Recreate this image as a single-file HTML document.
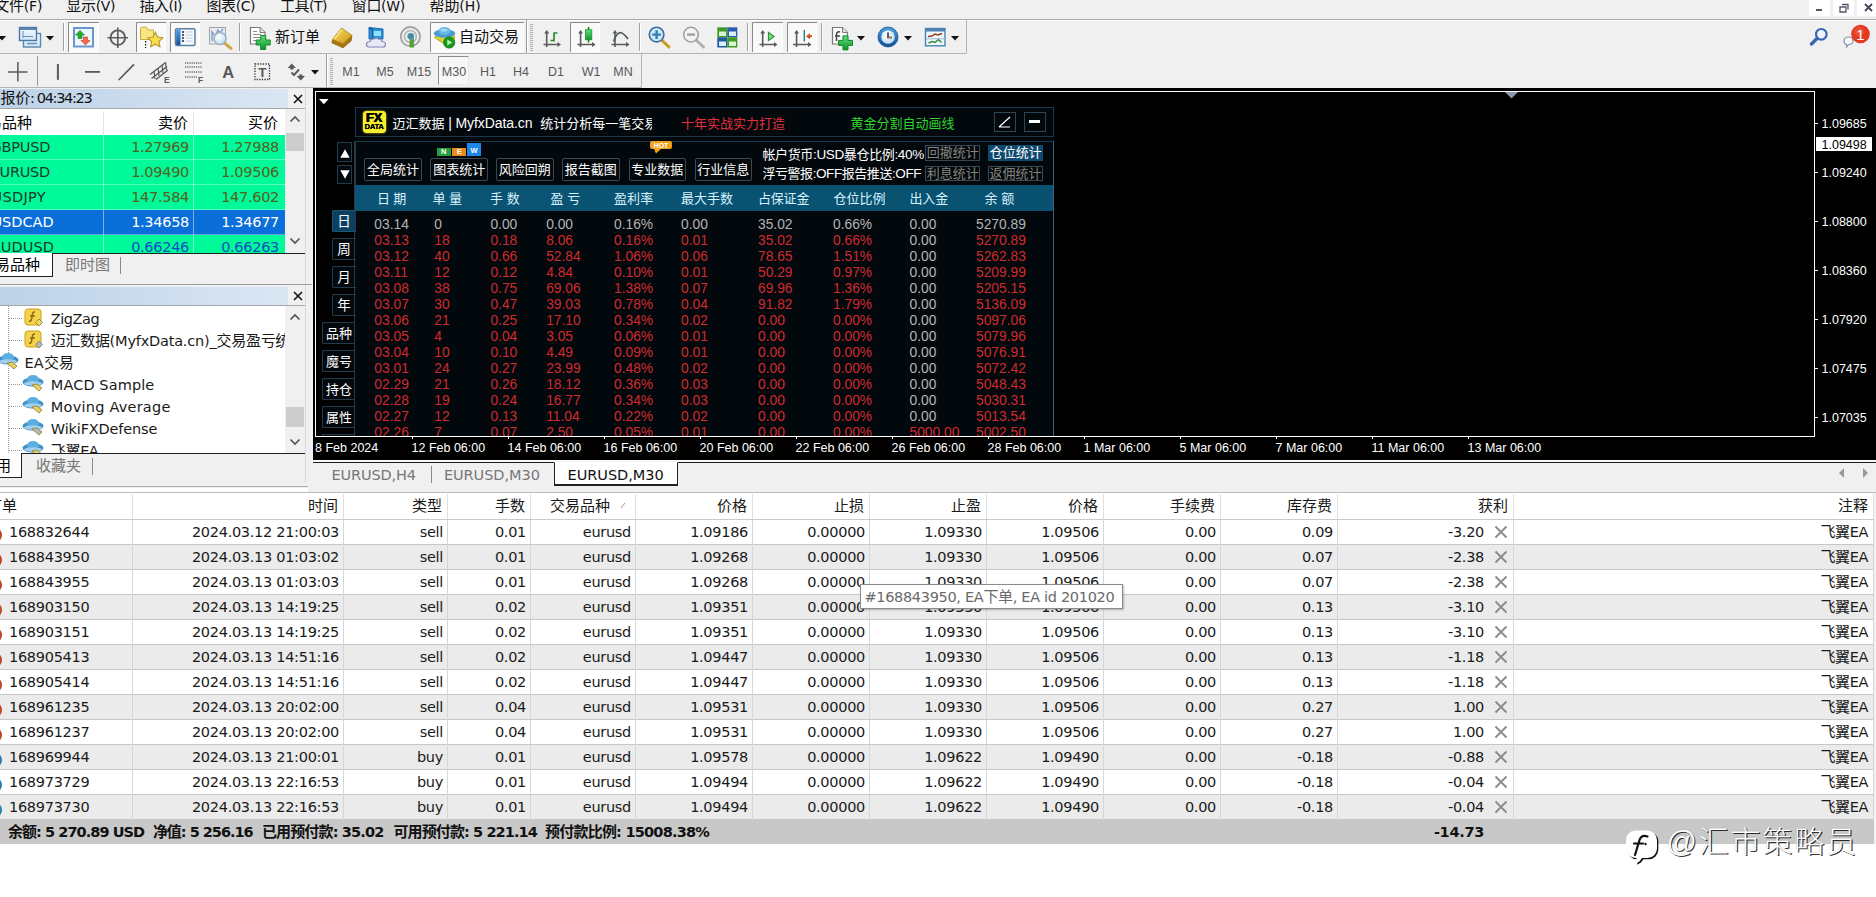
<!DOCTYPE html><html lang="zh"><head><meta charset="utf-8"><title>MT4</title><style>
*{box-sizing:border-box;margin:0;padding:0}
html,body{width:1876px;height:897px;overflow:hidden;background:#fff}
body{position:relative;font-family:"Liberation Sans","Noto Sans CJK SC",sans-serif;font-size:15px;color:#000}
.a{position:absolute;white-space:nowrap}
.menu{top:-4px;height:20px;line-height:20px;font-size:14px;font-family:"DejaVu Sans","Noto Sans CJK SC",sans-serif;color:#111}
.tb{background:#f0f0f0}
.u{font-family:"DejaVu Sans","Noto Sans CJK SC",sans-serif;font-size:14.5px;letter-spacing:-.3px}
.tf{font-size:12.5px;color:#585858;top:63px;height:18px;line-height:18px;text-align:center}
.mw td{}
.cell{position:absolute;white-space:nowrap;height:24px;line-height:24px;font-size:14.5px;letter-spacing:-.3px;font-family:"DejaVu Sans","Noto Sans CJK SC",sans-serif;color:#1a1a1a;text-align:right}
.hc{position:absolute;white-space:nowrap;height:25px;line-height:25px;font-size:15px;color:#1a1a1a;text-align:right}
.ov{font-family:"Liberation Sans","Noto Sans CJK SC",sans-serif}
.d{position:absolute;white-space:nowrap;font-size:13.8px;height:16px;line-height:16px;color:#d02b2e}
.g{color:#b4b4b4}
.btn{position:absolute;border:1px solid #3a4a55;color:#fff;font-size:13.5px;text-align:center;white-space:nowrap;overflow:hidden}
.side{position:absolute;border:1px solid #24404f;color:#fff;font-size:13.5px;text-align:center;white-space:nowrap;height:22px;line-height:20px}
.ax{position:absolute;white-space:nowrap;color:#fff;font-size:12.5px;font-family:"Liberation Sans",sans-serif;height:14px;line-height:14px}
</style></head><body>
<div class="a tb" style="left:0;top:0;width:1876px;height:88px"></div>
<div class="a" style="left:0;top:19px;width:1876px;height:1px;background:#a8a8a8"></div>
<div class="a" style="left:0;top:20px;width:1876px;height:1px;background:#fff"></div>
<div class="a menu" style="left:-5.8px"><span id="t1" style="letter-spacing:-0.20px"><span style="font-size:15px">文件</span>(F)</span></div>
<div class="a menu" style="left:66.3px"><span id="t2" style="letter-spacing:-0.31px"><span style="font-size:15px">显示</span>(V)</span></div>
<div class="a menu" style="left:139.5px"><span id="t3" style="letter-spacing:-0.52px"><span style="font-size:15px">插入</span>(I)</span></div>
<div class="a menu" style="left:206.5px"><span id="t4" style="letter-spacing:-0.44px"><span style="font-size:15px">图表</span>(C)</span></div>
<div class="a menu" style="left:280px"><span id="t5" style="letter-spacing:-0.50px"><span style="font-size:15px">工具</span>(T)</span></div>
<div class="a menu" style="left:351.8px"><span id="t6" style="letter-spacing:-0.36px"><span style="font-size:15px">窗口</span>(W)</span></div>
<div class="a menu" style="left:429.5px"><span id="t7" style="letter-spacing:-0.09px"><span style="font-size:15px">帮助</span>(H)</span></div>
<div class="a" style="left:1809px;top:0;width:21px;height:16px;background:#fff"></div>
<div class="a" style="left:1833px;top:0;width:21px;height:16px;background:#fff"></div>
<div class="a" style="left:1857px;top:0;width:19px;height:16px;background:#fff"></div>
<div class="a" style="left:1816px;top:9px;width:6px;height:2px;background:#556"></div>
<svg class="a" style="left:1838px;top:2px" width="12" height="12" viewBox="0 0 12 12"><path d="M4 2.5h6v5M2 5h6v5h-6z" fill="none" stroke="#556" stroke-width="1.3"/></svg>
<svg class="a" style="left:1863px;top:2px" width="12" height="12" viewBox="0 0 12 12"><path d="M2 2l7 7M9 2l-7 7" fill="none" stroke="#445" stroke-width="1.8"/></svg>
<svg class="a" style="left:0;top:0" width="1876" height="89" viewBox="0 0 1876 89"><defs><linearGradient id="gw" x1="0" y1="0" x2="0" y2="1"><stop offset="0" stop-color="#f4fafe"/><stop offset="1" stop-color="#cfe6f7"/></linearGradient><linearGradient id="gg" x1="0" y1="0" x2="0" y2="1"><stop offset="0" stop-color="#5fe07a"/><stop offset="1" stop-color="#12902e"/></linearGradient><linearGradient id="gy" x1="0" y1="0" x2="1" y2="1"><stop offset="0" stop-color="#fbe36a"/><stop offset="1" stop-color="#c99412"/></linearGradient><linearGradient id="gb" x1="0" y1="0" x2="0" y2="1"><stop offset="0" stop-color="#4aa0e6"/><stop offset="1" stop-color="#134f94"/></linearGradient><radialGradient id="gc" cx=".4" cy=".35" r=".7"><stop offset="0" stop-color="#ffffff"/><stop offset="1" stop-color="#b9dcf5"/></radialGradient></defs><path d="M-2 36h8l-4 4.500z" fill="#111"/><rect x="23.5" y="33.500" width="17" height="13.500" fill="url(#gw)" stroke="#5a86b4" stroke-width="1.4"/><rect x="19.5" y="27.500" width="17" height="13" fill="url(#gw)" stroke="#5078a4" stroke-width="1.4"/><path d="M19.5 29h17" stroke="#5a86b4" stroke-width="2"/><path d="M23 31v7M23 36.500h10" stroke="#6a90b8" stroke-width="1" fill="none"/><path d="M27 43.500h10" stroke="#6a90b8" stroke-width="1.5"/><path d="M46 36h8l-4 4.500z" fill="#111"/><path d="M63.5 23V51" stroke="#a0a0a0" stroke-width="1"/><path d="M64.5 23V51" stroke="#fff" stroke-width="1"/><rect x="68" y="22" width="31" height="30" fill="#f9f9f9"/><path d="M68.5 52V22.5H99" fill="none" stroke="#8a8a8a" stroke-width="1"/><path d="M69 51.5H98.5V23" fill="none" stroke="#fff" stroke-width="1"/><rect x="74" y="28" width="19" height="18.500" fill="#eef7fd" stroke="#6a96cc" stroke-width="2"/><path d="M80 30.500l4.500 4.500h-2.500v3.500h-4v-3.500h-2.500z" fill="#22b030" stroke="#108a20" stroke-width=".7"/><path d="M85.500 45l-4.500-4.500h2.500v-3.500h4v3.500h2.500z" fill="#f46a4a" stroke="#d04828" stroke-width=".7"/><circle cx="117.800" cy="37.700" r="7.300" fill="none" stroke="#5e5e5e" stroke-width="1.9"/><path d="M117.800 27.500v20.500M107.500 37.700h20.500" stroke="#5e5e5e" stroke-width="1.600"/><rect x="136" y="22" width="30" height="30" fill="#f9f9f9"/><path d="M136.5 52V22.5H166" fill="none" stroke="#8a8a8a" stroke-width="1"/><path d="M137 51.5H165.5V23" fill="none" stroke="#fff" stroke-width="1"/><path d="M140.500 39.500v-10.500q0-2 2-2h3q1.500 0 2 1.500l.5 1.500h5.500v9.500z" fill="#f7e683" stroke="#c8ad3a" stroke-width="1"/><path d="M155.300 32.300l2.300 4.800 5.200.7-3.800 3.700.9 5.200-4.600-2.500-4.600 2.500.9-5.200-3.800-3.700 5.200-.7z" fill="#f5df4d" stroke="#b8962a" stroke-width="1.100"/><path d="M145.600 41v7" stroke="#222" stroke-width="1.300" stroke-dasharray="1.500 1.500"/><rect x="170" y="22" width="30" height="30" fill="#f9f9f9"/><path d="M170.5 52V22.5H200" fill="none" stroke="#8a8a8a" stroke-width="1"/><path d="M171 51.5H199.5V23" fill="none" stroke="#fff" stroke-width="1"/><rect x="175.500" y="28.800" width="19.500" height="16.800" rx="1.500" fill="#f2f8fd" stroke="#5a7f9f" stroke-width="1.500"/><rect x="176.200" y="29.500" width="4.300" height="15.400" fill="url(#gb)"/><path d="M182 32h2M182 35h2M182 38h2M182 41h2" stroke="#223" stroke-width="1.300"/><path d="M185.500 32h7M185.500 35h7M185.500 38h7M185.500 41h7" stroke="#c8ccd8" stroke-width="1"/><rect x="209.500" y="27.500" width="16" height="16.500" fill="#e8eaee" stroke="#a0a4aa" stroke-width="1"/><path d="M212 41v-9l3 4 3-6 2 3 3-4" fill="none" stroke="#7a9ac0" stroke-width="1.300"/><path d="M224 42.500l7 6" stroke="#d4a94a" stroke-width="3" stroke-linecap="round"/><circle cx="220" cy="38.500" r="6" fill="url(#gc)" fill-opacity=".9" stroke="#9eb2c6" stroke-width="1.600"/><path d="M239.5 23V51" stroke="#a0a0a0" stroke-width="1"/><path d="M240.5 23V51" stroke="#fff" stroke-width="1"/><path d="M250.500 27.500h9.500l5 5v11.500h-14.500z" fill="#fff" stroke="#7a7a7a" stroke-width="1.200"/><path d="M260 27.500v5h5" fill="#e4e4e4" stroke="#7a7a7a" stroke-width="1"/><path d="M253 31.500h4M253 34.500h8M253 37.500h8M253 40.500h5" stroke="#8a8a8a" stroke-width="1.200"/><path d="M260.7 35.5h5.0v4.5h4.5v5.0h-4.5v4.5h-5.0v-4.5h-4.5v-5.0h4.5z" fill="url(#gg)" stroke="#0e8a2a" stroke-width="1"/><path d="M332.500 39.500L343 43.500L352 35.500L351 41L343 47.800L332 42.800z" fill="#a87610" stroke="#8a5e08" stroke-width=".8"/><path d="M341.500 28L352 35.500L343 43.500L332.500 39.500z" fill="url(#gy)" stroke="#b88a14" stroke-width=".9"/><path d="M341.500 29.500l-7 9.500" stroke="#fff2a8" stroke-width="1.200" fill="none"/><path d="M369 27.500l14 1.500v10h-14z" fill="#2d8fdb" stroke="#1b6cb4" stroke-width="1"/><rect x="373.500" y="31" width="7.500" height="5" fill="#8fe0f8"/><path d="M369 27.500l3.500 2v9" fill="none" stroke="#1560a8" stroke-width="1.500"/><path d="M368.500 47q-2.500-.5-2-3 .5-2.500 3.500-2.500 1-3 4-2.500 2-2 4.500 0 3-.5 3.500 2.500 3.500 0 3.500 3 0 2.500-2.500 2.500z" fill="#e8eaf6" stroke="#7d86b4" stroke-width="1.200"/><circle cx="410.400" cy="36.600" r="9.600" fill="#f4f4f4" stroke="#a2a2a2" stroke-width="1.800"/><circle cx="410.400" cy="36.600" r="6" fill="none" stroke="#b4b8ba" stroke-width="1.800"/><path d="M409.500 38v9.500h4.500v-9.500z" fill="#57a13c"/><circle cx="410.800" cy="36.300" r="3.200" fill="#4b86a8" stroke="#6aa" stroke-width=".8"/><rect x="430" y="22" width="94" height="30" fill="#f9f9f9"/><path d="M430.500 52V22.500H524" fill="none" stroke="#8a8a8a"/><path d="M431 51.500H523.500V23" fill="none" stroke="#fff"/><path d="M435 36l9.500-3 10 3v3l-7 7-12.500-8z" fill="#d9d336" stroke="#a8a020" stroke-width=".8"/><ellipse cx="444.500" cy="33.500" rx="10.800" ry="4.200" fill="#4f9bd0"/><ellipse cx="444.500" cy="31" rx="6" ry="4" fill="#6ab8e6"/><ellipse cx="444" cy="30" rx="3.500" ry="1.600" fill="#a5d8f3"/><circle cx="449.200" cy="42.500" r="5.600" fill="#17971c" stroke="#0c7a12" stroke-width=".8"/><path d="M447.300 39.500l5 3-5 3z" fill="#b8f5b0"/><path d="M526.500 20V53" stroke="#9a9a9a"/><path d="M527.500 20V53" stroke="#fff"/><rect x="530" y="24" width="3" height="1" fill="#b0b0b0"/><rect x="530" y="26" width="3" height="1" fill="#b0b0b0"/><rect x="530" y="28" width="3" height="1" fill="#b0b0b0"/><rect x="530" y="30" width="3" height="1" fill="#b0b0b0"/><rect x="530" y="32" width="3" height="1" fill="#b0b0b0"/><rect x="530" y="34" width="3" height="1" fill="#b0b0b0"/><rect x="530" y="36" width="3" height="1" fill="#b0b0b0"/><rect x="530" y="38" width="3" height="1" fill="#b0b0b0"/><rect x="530" y="40" width="3" height="1" fill="#b0b0b0"/><rect x="530" y="42" width="3" height="1" fill="#b0b0b0"/><rect x="530" y="44" width="3" height="1" fill="#b0b0b0"/><rect x="530" y="46" width="3" height="1" fill="#b0b0b0"/><rect x="530" y="48" width="3" height="1" fill="#b0b0b0"/><rect x="530" y="50" width="3" height="1" fill="#b0b0b0"/><path d="M546.7 47V32M543.5 44.5H559" stroke="#5a5a5a" stroke-width="1.6" fill="none"/><path d="M544.2 33.5L546.7 30l2.500 3.500zM557.5 42.0L561 44.5l-3.500 2.500z" fill="#5a5a5a"/><path d="M554 41.500V32.500M554 40.500h-3.500M554 33h3.500" stroke="#2a8a2a" stroke-width="1.700" fill="none"/><rect x="570" y="22" width="30" height="30" fill="#f9f9f9"/><path d="M570.5 52V22.5H600" fill="none" stroke="#8a8a8a" stroke-width="1"/><path d="M571 51.5H599.5V23" fill="none" stroke="#fff" stroke-width="1"/><path d="M580.6 47V32M577.5 44.5H593.5" stroke="#5a5a5a" stroke-width="1.6" fill="none"/><path d="M578.1 33.5L580.6 30l2.500 3.500zM592.0 42.0L595.5 44.5l-3.500 2.500z" fill="#5a5a5a"/><path d="M588.600 27v15.500" stroke="#1a7a1a" stroke-width="1.600"/><rect x="585.500" y="29.800" width="6.300" height="10" fill="url(#gg)" stroke="#109a28" stroke-width=".8"/><path d="M615 47V32M611.5 44.5H627.5" stroke="#5a5a5a" stroke-width="1.6" fill="none"/><path d="M612.5 33.5L615 30l2.500 3.500zM626.0 42.0L629.5 44.5l-3.500 2.500z" fill="#5a5a5a"/><path d="M613.500 41.500q3-8.500 7-9 2.500 0 7.500 6.500" fill="none" stroke="#4a5a4a" stroke-width="1.600"/><path d="M639.5 23V51" stroke="#a0a0a0" stroke-width="1"/><path d="M640.5 23V51" stroke="#fff" stroke-width="1"/><path d="M661.500 40l7.500 7" stroke="#d9b23a" stroke-width="3.200" stroke-linecap="round"/><path d="M662 40.500l7 6.500" stroke="#9a7a1a" stroke-width="1" /><circle cx="656.600" cy="34.600" r="7.300" fill="#c9e9fa" stroke="#3b6c9c" stroke-width="1.600"/><path d="M656.600 30.300v8.600M652.300 34.600h8.600" stroke="#3a7cae" stroke-width="2.400"/><path d="M696 40l7.500 7" stroke="#b0b0b0" stroke-width="3" stroke-linecap="round"/><circle cx="691" cy="34.600" r="7.300" fill="#f3f3f3" stroke="#a0a0a0" stroke-width="1.500"/><path d="M687 34.600h8" stroke="#a2a2a2" stroke-width="2.400"/><rect x="717.300" y="27.300" width="10" height="10" fill="#3e9a28"/><rect x="727.300" y="27.300" width="10" height="10" fill="#2c5cb0"/><rect x="717.300" y="37.300" width="10" height="10.200" fill="#1c5c9c"/><rect x="727.300" y="37.300" width="10" height="10.200" fill="#3e9a28"/><rect x="719" y="31.500" width="7" height="4.500" fill="#d9f4cf"/><rect x="729" y="31.500" width="7" height="4.500" fill="#dbeefc"/><rect x="719" y="41.500" width="7" height="4.500" fill="#dbeefc"/><rect x="729" y="41.500" width="7" height="4.500" fill="#d9f4cf"/><path d="M747.5 23V51" stroke="#a0a0a0" stroke-width="1"/><path d="M748.5 23V51" stroke="#fff" stroke-width="1"/><rect x="752" y="22" width="31" height="30" fill="#f9f9f9"/><path d="M752.5 52V22.5H783" fill="none" stroke="#8a8a8a" stroke-width="1"/><path d="M753 51.5H782.5V23" fill="none" stroke="#fff" stroke-width="1"/><path d="M762.7 47V32M759.5 44.5H775.5" stroke="#5a5a5a" stroke-width="1.6" fill="none"/><path d="M760.2 33.5L762.7 30l2.500 3.500zM774.0 42.0L777.5 44.5l-3.500 2.500z" fill="#5a5a5a"/><path d="M768.500 32.500l5.500 4-5.500 4z" fill="#8fdc90" stroke="#2a9a3a" stroke-width="1.300"/><rect x="787" y="22" width="30" height="30" fill="#f9f9f9"/><path d="M787.5 52V22.5H817" fill="none" stroke="#8a8a8a" stroke-width="1"/><path d="M788 51.5H816.5V23" fill="none" stroke="#fff" stroke-width="1"/><path d="M796.6 47V32M793 44.5H809.5" stroke="#5a5a5a" stroke-width="1.6" fill="none"/><path d="M794.1 33.5L796.6 30l2.500 3.500zM808.0 42.0L811.5 44.5l-3.500 2.500z" fill="#5a5a5a"/><path d="M804.300 30v11.500" stroke="#2a7a8a" stroke-width="1.400"/><path d="M806 36.300l4-3v2h2v2h-2v2z" fill="#c8502a"/><path d="M821.5 23V51" stroke="#a0a0a0" stroke-width="1"/><path d="M822.5 23V51" stroke="#fff" stroke-width="1"/><path d="M832.500 27.500h10l5 5v11.500h-15z" fill="#fafafa" stroke="#7a7a7a" stroke-width="1.200"/><path d="M842.500 27.500v5h5" fill="#e4e4e4" stroke="#7a7a7a" stroke-width="1"/><path d="M840 32c-3-.8-3.500 1-3.500 3.500v5.500M835 36h5" stroke="#444" stroke-width="1.500" fill="none"/><path d="M843.0 35.9h5.0v4.5h4.5v5.0h-4.5v4.5h-5.0v-4.5h-4.5v-5.0h4.5z" fill="url(#gg)" stroke="#0e8a2a" stroke-width="1"/><path d="M857 36h8l-4 4.500z" fill="#111"/><circle cx="888" cy="37" r="10" fill="url(#gb)" stroke="#0f4a8a" stroke-width=".8"/><circle cx="888" cy="37" r="6.800" fill="url(#gc)"/><path d="M888 32.500v5h4" stroke="#222" stroke-width="1.500" fill="none"/><path d="M888 37.500h4" stroke="#c86a1a" stroke-width="1.300"/><path d="M904 36h8l-4 4.500z" fill="#111"/><rect x="925.500" y="28.500" width="19.500" height="17.300" fill="#eef7fd" stroke="#4c82b4" stroke-width="1.400"/><rect x="925.500" y="28.500" width="19.500" height="3" fill="#4c82b4"/><path d="M928 36.500l4-.5 3-2 3 1 4-1.500" fill="none" stroke="#9a3a1a" stroke-width="1.500"/><path d="M928.500 43l3.500-1.500 3 1 3.500-3 3 3" fill="none" stroke="#3a8a3a" stroke-width="1.500"/><path d="M926 38.800h19" stroke="#9ab8d0" stroke-width="1"/><path d="M951 36h8l-4 4.500z" fill="#111"/><path d="M966.500 20V53.500H0" fill="none" stroke="#b4b4b4"/><path d="M1811.500 44l5.500-5.500" stroke="#3a66b0" stroke-width="3.400" stroke-linecap="round"/><circle cx="1821.300" cy="34.300" r="5.300" fill="#eef4fc" stroke="#3a66b0" stroke-width="2.200"/><path d="M1844 41q0-4 4.500-4 4.500 0 4.500 4 0 3.500-4.500 3.500l-2 2.500v-2.500q-2.500-.5-2.500-3.500z" fill="#f8f8fa" stroke="#8a94b0" stroke-width="1.200"/><circle cx="1860.500" cy="34" r="9.300" fill="#e03a22"/><circle cx="1859" cy="31.500" r="5" fill="#f0583a" fill-opacity=".6"/><text x="1860.500" y="39.500" font-size="15" fill="#fff" text-anchor="middle" font-family="Liberation Sans,sans-serif">1</text><path d="M17.900 62v19.500M8 71.900h19.500" stroke="#5a5a5a" stroke-width="1.500"/><path d="M37.500 56V86" stroke="#9a9a9a"/><path d="M57.900 64v15.800" stroke="#5a5a5a" stroke-width="2"/><path d="M85 71.900h15" stroke="#5a5a5a" stroke-width="1.800"/><path d="M118.700 80L134 64.400" stroke="#5a5a5a" stroke-width="1.700"/><path d="M150 74.500l15-11.500M151.500 78.500l15.500-12M156 79.500l12-9.500" stroke="#5a5a5a" stroke-width="1.400"/><path d="M154 71l1 8M158 68l1 8M162 65l1 8M165.500 62l1 8" stroke="#5a5a5a" stroke-width="1.200"/><text x="164" y="82.500" font-size="8.500" font-weight="bold" fill="#5a5a5a" font-family="Liberation Sans,sans-serif">E</text><path d="M185 63h17" stroke="#6a6a6a" stroke-width="1.400" stroke-dasharray="1.200 1"/><path d="M185 67h17" stroke="#6a6a6a" stroke-width="1.400" stroke-dasharray="1.200 1"/><path d="M185 72h17" stroke="#6a6a6a" stroke-width="1.400" stroke-dasharray="1.200 1"/><path d="M185 77h12" stroke="#6a6a6a" stroke-width="1.400" stroke-dasharray="1.200 1"/><text x="198" y="82.500" font-size="8.500" font-weight="bold" fill="#5a5a5a" font-family="Liberation Sans,sans-serif">F</text><text x="228.300" y="78" font-size="16.500" font-weight="bold" fill="#5a5a5a" text-anchor="middle" font-family="Liberation Sans,sans-serif">A</text><rect x="255" y="64" width="14.500" height="15.500" fill="none" stroke="#333" stroke-width="1.300" stroke-dasharray="1.300 1.300"/><text x="262.300" y="77.300" font-size="13.500" font-weight="bold" fill="#5a5a5a" text-anchor="middle" font-family="Liberation Sans,sans-serif">T</text><path d="M291.800 63.500l4.200 4.500h-2.500v1.500h-3.400v-1.500h-2.500z" fill="#5a5a5a"/><path d="M300.800 80.500l-4.200-4.500h2.500v-1.500h3.400v1.500h2.500z" fill="#5a5a5a"/><path d="M291.500 72.500l2.500 2.500 5-5.500" fill="none" stroke="#5a5a5a" stroke-width="1.900"/><path d="M311 70h8l-4 4.500z" fill="#111"/><path d="M326.500 54V88" stroke="#9a9a9a"/><path d="M327.500 54V88" stroke="#fff"/><rect x="330" y="58" width="3" height="1" fill="#b0b0b0"/><rect x="330" y="60" width="3" height="1" fill="#b0b0b0"/><rect x="330" y="62" width="3" height="1" fill="#b0b0b0"/><rect x="330" y="64" width="3" height="1" fill="#b0b0b0"/><rect x="330" y="66" width="3" height="1" fill="#b0b0b0"/><rect x="330" y="68" width="3" height="1" fill="#b0b0b0"/><rect x="330" y="70" width="3" height="1" fill="#b0b0b0"/><rect x="330" y="72" width="3" height="1" fill="#b0b0b0"/><rect x="330" y="74" width="3" height="1" fill="#b0b0b0"/><rect x="330" y="76" width="3" height="1" fill="#b0b0b0"/><rect x="330" y="78" width="3" height="1" fill="#b0b0b0"/><rect x="330" y="80" width="3" height="1" fill="#b0b0b0"/><rect x="330" y="82" width="3" height="1" fill="#b0b0b0"/><rect x="330" y="84" width="3" height="1" fill="#b0b0b0"/><path d="M641.500 54V87.500H0" fill="none" stroke="#b4b4b4"/></svg>
<div class="a tf" style="left:331px;width:40px">M1</div>
<div class="a tf" style="left:365px;width:40px">M5</div>
<div class="a tf" style="left:399px;width:40px">M15</div>
<div class="a" style="left:438px;top:56px;width:31px;height:29px;background:#f7f7f7;border:1px solid #e8e8e8;border-top-color:#8e8e8e;border-left-color:#8e8e8e"></div>
<div class="a tf" style="left:434px;width:40px">M30</div>
<div class="a tf" style="left:468px;width:40px">H1</div>
<div class="a tf" style="left:501px;width:40px">H4</div>
<div class="a tf" style="left:536px;width:40px">D1</div>
<div class="a tf" style="left:571px;width:40px">W1</div>
<div class="a tf" style="left:603px;width:40px">MN</div>
<div class="a" style="left:275px;top:27px;font-size:15px;height:20px;line-height:20px;color:#111">新订单</div>
<div class="a" style="left:459px;top:27px;font-size:15px;height:20px;line-height:20px;color:#111">自动交易</div>
<div class="a" style="left:0;top:88px;width:313px;height:400px;background:#f0f0f0"></div>
<div class="a" style="left:0;top:89px;width:288px;height:19px;background:linear-gradient(90deg,#bcd2e8,#dbe6f3)"></div>
<div class="a u" style="right:1784.6px;top:89px;height:19px;line-height:19px;color:#111"><span style="font-size:15px">报价</span><span id="t8" style="letter-spacing:-1.31px">: 04:34:23</span></div>
<svg class="a" style="left:292px;top:92.500px" width="12" height="12" viewBox="0 0 12 12"><path d="M2 2l8 8M10 2l-8 8" stroke="#111" stroke-width="1.6"/></svg>
<div class="a" style="left:0;top:108px;width:306px;height:1px;background:#a6a6a6"></div>
<div class="a" style="left:0;top:109px;width:285px;height:144px;background:#fff"></div>
<div class="a" style="left:-28px;top:111px;height:24px;line-height:24px;font-size:15px">交易品种</div>
<div class="a" style="left:104px;top:111px;width:84px;height:24px;line-height:24px;font-size:15px;text-align:right">卖价</div>
<div class="a" style="left:194px;top:111px;width:84px;height:24px;line-height:24px;font-size:15px;text-align:right">买价</div>
<div class="a" style="left:103px;top:111px;width:1px;height:24px;background:#e4e4e4"></div>
<div class="a" style="left:193px;top:111px;width:1px;height:24px;background:#e4e4e4"></div>
<div class="a" style="left:0;top:135px;width:285px;height:25px;background:#00fa9a;overflow:hidden">
<div class="a u" style="left:-9.6px;top:0;height:25px;line-height:25px;color:#1a3a2a"><span id="t9" style="letter-spacing:-0.19px">GBPUSD</span></div>
<div class="a u" style="left:104px;top:0;width:85px;height:25px;line-height:25px;color:#55621c;text-align:right">1.27969</div>
<div class="a u" style="left:194px;top:0;width:85px;height:25px;line-height:25px;color:#55621c;text-align:right">1.27988</div>
<div class="a" style="left:103px;top:0;width:1px;height:25px;background:rgba(255,255,255,.45)"></div>
<div class="a" style="left:193px;top:0;width:1px;height:25px;background:rgba(255,255,255,.45)"></div>
<div class="a" style="left:0;top:24px;width:285px;height:1px;background:rgba(255,255,255,.35)"></div>
</div>
<div class="a" style="left:0;top:160px;width:285px;height:25px;background:#00fa9a;overflow:hidden">
<div class="a u" style="left:-9.4px;top:0;height:25px;line-height:25px;color:#1a3a2a"><span id="t10" style="letter-spacing:-0.24px">EURUSD</span></div>
<div class="a u" style="left:104px;top:0;width:85px;height:25px;line-height:25px;color:#55621c;text-align:right">1.09490</div>
<div class="a u" style="left:194px;top:0;width:85px;height:25px;line-height:25px;color:#55621c;text-align:right">1.09506</div>
<div class="a" style="left:103px;top:0;width:1px;height:25px;background:rgba(255,255,255,.45)"></div>
<div class="a" style="left:193px;top:0;width:1px;height:25px;background:rgba(255,255,255,.45)"></div>
<div class="a" style="left:0;top:24px;width:285px;height:1px;background:rgba(255,255,255,.35)"></div>
</div>
<div class="a" style="left:0;top:185px;width:285px;height:25px;background:#00fa9a;overflow:hidden">
<div class="a u" style="left:-8.4px;top:0;height:25px;line-height:25px;color:#1a3a2a"><span id="t11" style="letter-spacing:0.28px">USDJPY</span></div>
<div class="a u" style="left:104px;top:0;width:85px;height:25px;line-height:25px;color:#55621c;text-align:right">147.584</div>
<div class="a u" style="left:194px;top:0;width:85px;height:25px;line-height:25px;color:#55621c;text-align:right">147.602</div>
<div class="a" style="left:103px;top:0;width:1px;height:25px;background:rgba(255,255,255,.45)"></div>
<div class="a" style="left:193px;top:0;width:1px;height:25px;background:rgba(255,255,255,.45)"></div>
<div class="a" style="left:0;top:24px;width:285px;height:1px;background:rgba(255,255,255,.35)"></div>
</div>
<div class="a" style="left:0;top:210px;width:285px;height:25px;background:#0a6fd8;overflow:hidden">
<div class="a u" style="left:-8.5px;top:0;height:25px;line-height:25px;color:#fff"><span id="t12" style="letter-spacing:-0.02px">USDCAD</span></div>
<div class="a u" style="left:104px;top:0;width:85px;height:25px;line-height:25px;color:#fff;text-align:right">1.34658</div>
<div class="a u" style="left:194px;top:0;width:85px;height:25px;line-height:25px;color:#fff;text-align:right">1.34677</div>
<div class="a" style="left:103px;top:0;width:1px;height:25px;background:rgba(255,255,255,.45)"></div>
<div class="a" style="left:193px;top:0;width:1px;height:25px;background:rgba(255,255,255,.45)"></div>
<div class="a" style="left:0;top:24px;width:285px;height:1px;background:rgba(255,255,255,.35)"></div>
</div>
<div class="a" style="left:0;top:235px;width:285px;height:18px;background:#00fa9a;overflow:hidden">
<div class="a u" style="left:-9.2px;top:0;height:25px;line-height:25px;color:#1a3a2a"><span id="t13" style="letter-spacing:0.09px">AUDUSD</span></div>
<div class="a u" style="left:104px;top:0;width:85px;height:25px;line-height:25px;color:#0a50c0;text-align:right">0.66246</div>
<div class="a u" style="left:194px;top:0;width:85px;height:25px;line-height:25px;color:#0a50c0;text-align:right">0.66263</div>
<div class="a" style="left:103px;top:0;width:1px;height:25px;background:rgba(255,255,255,.45)"></div>
<div class="a" style="left:193px;top:0;width:1px;height:25px;background:rgba(255,255,255,.45)"></div>
</div>
<div class="a" style="left:285px;top:109px;width:20px;height:144px;background:#f0f0f0"></div>
<div class="a" style="left:286px;top:133px;width:18px;height:18px;background:#cdcdcd"></div>
<svg class="a" style="left:289px;top:114px" width="12" height="10" viewBox="0 0 12 10"><path d="M1.5 7.5L6 3l4.5 4.5" fill="none" stroke="#555" stroke-width="1.7"/></svg>
<svg class="a" style="left:289px;top:236px" width="12" height="10" viewBox="0 0 12 10"><path d="M1.5 2.5L6 7l4.5-4.5" fill="none" stroke="#555" stroke-width="1.7"/></svg>
<div class="a" style="left:0;top:253px;width:305px;height:1px;background:#222"></div>
<div class="a" style="left:-5px;top:253px;width:58px;height:24px;background:#fff;border:1px solid #222;border-top:none"></div>
<div class="a" style="left:-20px;top:254px;height:22px;line-height:22px;font-size:15px">交易品种</div>
<div class="a" style="left:65px;top:254px;height:22px;line-height:22px;font-size:15px;color:#777">即时图</div>
<div class="a" style="left:120px;top:257px;width:1px;height:17px;background:#888"></div>
<div class="a" style="left:0;top:287px;width:288px;height:18px;background:linear-gradient(90deg,#bcd2e8,#dbe6f3)"></div>
<div class="a" style="left:0;top:305px;width:306px;height:1px;background:#a6a6a6"></div>
<svg class="a" style="left:292px;top:289.500px" width="12" height="12" viewBox="0 0 12 12"><path d="M2 2l8 8M10 2l-8 8" stroke="#111" stroke-width="1.6"/></svg>
<div class="a" style="left:0;top:306px;width:285px;height:147px;background:#fff;overflow:hidden">
<div class="a u" style="left:50.8px;top:2px;height:22px;line-height:22px;color:#1a1a1a"><span id="t14" style="letter-spacing:-0.47px">ZigZag</span></div>
<div class="a u" style="left:50.8px;top:24px;height:22px;line-height:22px;color:#1a1a1a"><span style="font-size:15px">迈汇数据</span><span id="t15" style="letter-spacing:-0.20px">(MyfxData.cn)_</span><span style="font-size:15px">交易盈亏统计</span></div>
<div class="a u" style="left:24.5px;top:46px;height:22px;line-height:22px;color:#1a1a1a"><span id="t16" style="letter-spacing:0.20px">EA</span><span style="font-size:15px">交易</span></div>
<div class="a u" style="left:50.8px;top:68px;height:22px;line-height:22px;color:#1a1a1a"><span id="t17" style="letter-spacing:0.10px">MACD Sample</span></div>
<div class="a u" style="left:50.8px;top:90px;height:22px;line-height:22px;color:#1a1a1a"><span id="t18" style="letter-spacing:0.23px">Moving Average</span></div>
<div class="a u" style="left:50.8px;top:112px;height:22px;line-height:22px;color:#1a1a1a"><span id="t19" style="letter-spacing:-0.16px">WikiFXDefense</span></div>
<div class="a u" style="left:50.8px;top:134px;height:22px;line-height:22px;color:#1a1a1a"><span style="font-size:15px">飞翼</span><span id="t20" style="letter-spacing:-0.55px">EA</span></div>
</div>
<div class="a" style="left:8px;top:306px;width:0;height:147px;border-left:1px dotted #999"></div>
<div class="a" style="left:8px;top:318px;width:14px;height:0;border-top:1px dotted #999"></div>
<div class="a" style="left:8px;top:340px;width:14px;height:0;border-top:1px dotted #999"></div>
<div class="a" style="left:8px;top:384px;width:14px;height:0;border-top:1px dotted #999"></div>
<div class="a" style="left:8px;top:406px;width:14px;height:0;border-top:1px dotted #999"></div>
<div class="a" style="left:8px;top:428px;width:14px;height:0;border-top:1px dotted #999"></div>
<div class="a" style="left:8px;top:450px;width:14px;height:0;border-top:1px dotted #999"></div>
<svg class="a" style="left:24px;top:308px" width="20" height="20" viewBox="0 0 20 20"><rect x="1" y="1" width="16" height="16" rx="3" fill="#f5d34a" stroke="#c9a11c"/><path d="M11 4c-2.5-.5-2.5 2-3 5s-1 5-3 4M6 8h5" fill="none" stroke="#8a6a10" stroke-width="1.5"/><path d="M15 11l3.500 3.500-3.500 3.500-3.500-3.500z" fill="#f3d94e" stroke="#777" stroke-width=".8"/></svg>
<svg class="a" style="left:24px;top:330px" width="20" height="20" viewBox="0 0 20 20"><rect x="1" y="1" width="16" height="16" rx="3" fill="#f5d34a" stroke="#c9a11c"/><path d="M11 4c-2.5-.5-2.5 2-3 5s-1 5-3 4M6 8h5" fill="none" stroke="#8a6a10" stroke-width="1.5"/><path d="M15 11l3.500 3.500-3.500 3.500-3.500-3.500z" fill="#b8b8b8" stroke="#777" stroke-width=".8"/></svg>
<svg class="a" style="left:-3px;top:352px" width="24" height="20" viewBox="0 0 24 20"><ellipse cx="11" cy="8" rx="10.500" ry="4.500" fill="#3d8fc4"/><ellipse cx="11" cy="5.500" rx="6" ry="4.500" fill="#5aaee0"/><ellipse cx="11" cy="9.500" rx="9" ry="2.200" fill="#9ed0ee"/><path d="M10 11l7 6 3-3-5-4z" fill="#e8d060" stroke="#8a7a30" stroke-width=".8"/></svg>
<svg class="a" style="left:22px;top:374px" width="24" height="20" viewBox="0 0 24 20"><ellipse cx="11" cy="8" rx="10.500" ry="4.500" fill="#3d8fc4"/><ellipse cx="11" cy="5.500" rx="6" ry="4.500" fill="#5aaee0"/><ellipse cx="11" cy="9.500" rx="9" ry="2.200" fill="#9ed0ee"/><path d="M10 11l7 6 3-3-5-4z" fill="#e8d060" stroke="#8a7a30" stroke-width=".8"/></svg>
<svg class="a" style="left:22px;top:396px" width="24" height="20" viewBox="0 0 24 20"><ellipse cx="11" cy="8" rx="10.500" ry="4.500" fill="#3d8fc4"/><ellipse cx="11" cy="5.500" rx="6" ry="4.500" fill="#5aaee0"/><ellipse cx="11" cy="9.500" rx="9" ry="2.200" fill="#9ed0ee"/><path d="M10 11l7 6 3-3-5-4z" fill="#e8d060" stroke="#8a7a30" stroke-width=".8"/></svg>
<svg class="a" style="left:22px;top:418px" width="24" height="20" viewBox="0 0 24 20"><ellipse cx="11" cy="8" rx="10.500" ry="4.500" fill="#3d8fc4"/><ellipse cx="11" cy="5.500" rx="6" ry="4.500" fill="#5aaee0"/><ellipse cx="11" cy="9.500" rx="9" ry="2.200" fill="#9ed0ee"/><path d="M10 11l7 6 3-3-5-4z" fill="#b8b8b8" stroke="#8a7a30" stroke-width=".8"/></svg>
<div class="a" style="left:22px;top:440px;width:24px;height:13px;overflow:hidden"><svg class="a" style="left:0px;top:0px" width="24" height="20" viewBox="0 0 24 20"><ellipse cx="11" cy="8" rx="10.500" ry="4.500" fill="#3d8fc4"/><ellipse cx="11" cy="5.500" rx="6" ry="4.500" fill="#5aaee0"/><ellipse cx="11" cy="9.500" rx="9" ry="2.200" fill="#9ed0ee"/><path d="M10 11l7 6 3-3-5-4z" fill="#e8d060" stroke="#8a7a30" stroke-width=".8"/></svg></div>
<div class="a" style="left:285px;top:306px;width:20px;height:147px;background:#f0f0f0"></div>
<div class="a" style="left:286px;top:407px;width:18px;height:20px;background:#cdcdcd"></div>
<svg class="a" style="left:289px;top:312px" width="12" height="10" viewBox="0 0 12 10"><path d="M1.5 7.5L6 3l4.5 4.5" fill="none" stroke="#555" stroke-width="1.7"/></svg>
<svg class="a" style="left:289px;top:437px" width="12" height="10" viewBox="0 0 12 10"><path d="M1.5 2.5L6 7l4.5-4.500" fill="none" stroke="#555" stroke-width="1.7"/></svg>
<div class="a" style="left:0;top:453px;width:305px;height:1px;background:#222"></div>
<div class="a" style="left:-5px;top:453px;width:27px;height:25px;background:#fff;border:1px solid #222;border-top:none"></div>
<div class="a" style="left:-19px;top:455px;height:22px;line-height:22px;font-size:15px">常用</div>
<div class="a" style="left:36px;top:455px;height:22px;line-height:22px;font-size:15px;color:#777">收藏夹</div>
<div class="a" style="left:92px;top:458px;width:1px;height:17px;background:#888"></div>
<div class="a" style="left:305px;top:88px;width:1px;height:395px;background:#d9d9d9"></div>
<div class="a" style="left:0;top:284px;width:312px;height:1px;background:#9c9c9c"></div>
<div class="a" style="left:0;top:486px;width:313px;height:1px;background:#b0b0b0"></div>
<div class="a" style="left:312px;top:461px;width:1px;height:25px;background:#555"></div>
<div class="a" style="left:313px;top:88px;width:1563px;height:372px;background:#000"></div>
<div class="a" style="left:315px;top:91px;width:1500px;height:346px;border:1px solid #fff"></div>
<svg class="a" style="left:318.500px;top:99px" width="10" height="6" viewBox="0 0 10 6"><path d="M0 0h9.600l-4.800 5.200z" fill="#fff"/></svg>
<svg class="a" style="left:1505px;top:92px" width="13" height="7" viewBox="0 0 13 7"><path d="M0 0h13l-6.500 6.500z" fill="#8a97a8"/></svg>
<div class="ax" style="left:1821.500px;top:117px">1.09685</div>
<div class="a" style="left:1815px;top:123px;width:3px;height:1px;background:#fff"></div>
<div class="ax" style="left:1821.500px;top:166px">1.09240</div>
<div class="a" style="left:1815px;top:172px;width:3px;height:1px;background:#fff"></div>
<div class="ax" style="left:1821.500px;top:215px">1.08800</div>
<div class="a" style="left:1815px;top:221px;width:3px;height:1px;background:#fff"></div>
<div class="ax" style="left:1821.500px;top:264px">1.08360</div>
<div class="a" style="left:1815px;top:270px;width:3px;height:1px;background:#fff"></div>
<div class="ax" style="left:1821.500px;top:313px">1.07920</div>
<div class="a" style="left:1815px;top:319px;width:3px;height:1px;background:#fff"></div>
<div class="ax" style="left:1821.500px;top:362px">1.07475</div>
<div class="a" style="left:1815px;top:368px;width:3px;height:1px;background:#fff"></div>
<div class="ax" style="left:1821.500px;top:411px">1.07035</div>
<div class="a" style="left:1815px;top:417px;width:3px;height:1px;background:#fff"></div>
<div class="a" style="left:1816px;top:137px;width:56px;height:14px;background:#fff"></div>
<div class="ax" style="left:1821.500px;top:138px;color:#000">1.09498</div>
<div class="ax" style="left:315px;top:440.500px">8 Feb 2024</div>
<div class="ax" style="left:411.5px;top:440.500px">12 Feb 06:00</div>
<div class="a" style="left:412px;top:436px;width:1px;height:3px;background:#fff"></div>
<div class="ax" style="left:507.5px;top:440.500px">14 Feb 06:00</div>
<div class="a" style="left:508px;top:436px;width:1px;height:3px;background:#fff"></div>
<div class="ax" style="left:603.5px;top:440.500px">16 Feb 06:00</div>
<div class="a" style="left:604px;top:436px;width:1px;height:3px;background:#fff"></div>
<div class="ax" style="left:699.5px;top:440.500px">20 Feb 06:00</div>
<div class="a" style="left:700px;top:436px;width:1px;height:3px;background:#fff"></div>
<div class="ax" style="left:795.5px;top:440.500px">22 Feb 06:00</div>
<div class="a" style="left:796px;top:436px;width:1px;height:3px;background:#fff"></div>
<div class="ax" style="left:891.5px;top:440.500px">26 Feb 06:00</div>
<div class="a" style="left:892px;top:436px;width:1px;height:3px;background:#fff"></div>
<div class="ax" style="left:987.5px;top:440.500px">28 Feb 06:00</div>
<div class="a" style="left:988px;top:436px;width:1px;height:3px;background:#fff"></div>
<div class="ax" style="left:1083.5px;top:440.500px">1 Mar 06:00</div>
<div class="a" style="left:1084px;top:436px;width:1px;height:3px;background:#fff"></div>
<div class="ax" style="left:1179.5px;top:440.500px">5 Mar 06:00</div>
<div class="a" style="left:1180px;top:436px;width:1px;height:3px;background:#fff"></div>
<div class="ax" style="left:1275.5px;top:440.500px">7 Mar 06:00</div>
<div class="a" style="left:1276px;top:436px;width:1px;height:3px;background:#fff"></div>
<div class="ax" style="left:1371.5px;top:440.500px">11 Mar 06:00</div>
<div class="a" style="left:1372px;top:436px;width:1px;height:3px;background:#fff"></div>
<div class="ax" style="left:1467.5px;top:440.500px">13 Mar 06:00</div>
<div class="a" style="left:1468px;top:436px;width:1px;height:3px;background:#fff"></div>
<div class="a ov" style="left:355px;top:107px;width:699px;height:329px;background:#03080d;overflow:hidden">
<div class="a" style="left:0;top:0;width:699px;height:30px;border:1px solid #1c3849"></div>
<div class="a" style="left:7.500px;top:4px;width:23px;height:21.500px;background:#f4ee2c;border-radius:4px;box-shadow:0 0 2px #f4ee2c"></div>
<div class="a" style="left:7.500px;top:4.500px;width:23px;height:12px;line-height:12px;font-size:13px;font-weight:bold;color:#000;text-align:center;letter-spacing:-.3px;text-shadow:.4px 0 0 #000,-.4px 0 0 #000">FX</div>
<div class="a" style="left:7.500px;top:15px;width:23px;height:9px;line-height:9px;font-size:7.500px;font-weight:bold;color:#000;text-align:center;letter-spacing:-.2px;text-shadow:.3px 0 0 #000">DATA</div>
<div class="a" style="left:37.400px;top:6px;width:259.600px;height:20px;line-height:20px;font-size:14px;color:#fff;overflow:hidden"><span style="font-size:13px">迈汇数据</span><span id="t21" style="letter-spacing:-0.09px"> | MyfxData.cn</span>&nbsp;&nbsp;<span style="font-size:13px">统计分析每一笔交易</span></div>
<div class="a" style="left:326px;top:6.500px;height:20px;line-height:20px;font-size:13px;color:#e4303c">十年实战实力打造</div>
<div class="a" style="left:495.500px;top:6.500px;height:20px;line-height:20px;font-size:13px;color:#2fd42f">黄金分割自动画线</div>
<div class="a" style="left:639px;top:5px;width:22px;height:20px;border:1px solid #2a4656"></div>
<svg class="a" style="left:642px;top:8px" width="16" height="14" viewBox="0 0 16 14"><path d="M2 12h11M2 12L13 2" stroke="#fff" stroke-width="1.2" fill="none"/></svg>
<div class="a" style="left:669px;top:5px;width:22px;height:20px;border:1px solid #2a4656"></div>
<div class="a" style="left:673.500px;top:12.500px;width:11.500px;height:3px;background:#fff"></div>
<div class="a" style="left:0;top:34px;width:699px;height:44px;border:1px solid #1c3849;border-bottom:none"></div>
<div class="btn" style="left:9.3px;top:50.500px;width:57.500px;height:23.500px;line-height:22px;font-size:13px;border-radius:2px">全局统计</div>
<div class="btn" style="left:75.4px;top:50.500px;width:57.500px;height:23.500px;line-height:22px;font-size:13px;border-radius:2px">图表统计</div>
<div class="btn" style="left:141px;top:50.500px;width:57.500px;height:23.500px;line-height:22px;font-size:13px;border-radius:2px">风险回朔</div>
<div class="btn" style="left:207px;top:50.500px;width:57.500px;height:23.500px;line-height:22px;font-size:13px;border-radius:2px">报告截图</div>
<div class="btn" style="left:273.5px;top:50.500px;width:57.500px;height:23.500px;line-height:22px;font-size:13px;border-radius:2px">专业数据</div>
<div class="btn" style="left:339.6px;top:50.500px;width:57.500px;height:23.500px;line-height:22px;font-size:13px;border-radius:2px">行业信息</div>
<div class="a" style="left:82px;top:41.300px;width:13.600px;height:7.600px;background:#24a03c;color:#fff;font-size:7.500px;line-height:8px;text-align:center;font-weight:bold">N</div>
<div class="a" style="left:97.200px;top:41.300px;width:14px;height:7.600px;background:#f08a1d;color:#fff;font-size:7.500px;line-height:8px;text-align:center;font-weight:bold">E</div>
<div class="a" style="left:112px;top:36.300px;width:14px;height:12.600px;background:#1f86ea;color:#fff;font-size:7.500px;line-height:15px;text-align:center;font-weight:bold">W</div>
<div class="a" style="left:295px;top:33.500px;width:22px;height:8.500px;background:#f0a21d;border-radius:2px;color:#fff;font-size:7px;line-height:9px;text-align:center;font-weight:bold">HOT</div>
<svg class="a" style="left:299px;top:41.500px" width="8" height="5" viewBox="0 0 8 5"><path d="M0 0h7L2 4.500z" fill="#f0a21d"/></svg>
<div class="a" style="left:407.400px;top:38.400px;height:20px;line-height:20px;font-size:13.500px;color:#fff"><span id="t22" style="letter-spacing:-0.35px"><span style="font-size:13px">帐户货币</span>:USD<span style="font-size:13px">暴仓比例</span>:40%</span></div>
<div class="a" style="left:407.400px;top:56.500px;height:20px;line-height:20px;font-size:13.500px;color:#fff"><span id="t23" style="letter-spacing:-0.43px"><span style="font-size:13px">浮亏警报</span>:OFF<span style="font-size:13px">报告推送</span>:OFF</span></div>
<div class="btn" style="left:570.2px;top:38.4px;width:55px;height:15.200px;line-height:13.500px;font-size:13px;color:#85857f;border-color:#3a4750">回撤统计</div>
<div class="btn" style="left:633px;top:38.4px;width:55.400px;height:15.200px;line-height:13.500px;font-size:13px;background:#0e4a6e;border-color:#0e4a6e;color:#fff">仓位统计</div>
<div class="btn" style="left:570.2px;top:58.8px;width:55px;height:15.200px;line-height:13.500px;font-size:13px;color:#85857f;border-color:#3a4750">利息统计</div>
<div class="btn" style="left:633px;top:58.8px;width:55px;height:15.200px;line-height:13.500px;font-size:13px;color:#85857f;border-color:#3a4750">返佣统计</div>
<div class="a" style="left:0;top:77.500px;width:699px;height:26.300px;background:linear-gradient(90deg,#0b5474,#085170)"></div>
<div class="a" style="left:22px;top:82px;height:20px;line-height:20px;font-size:13px;color:#d6f2ff"><span id="t24" style="letter-spacing:-0.21px">日 期</span></div>
<div class="a" style="left:77.4px;top:82px;height:20px;line-height:20px;font-size:13px;color:#d6f2ff"><span id="t25" style="letter-spacing:-0.01px">单 量</span></div>
<div class="a" style="left:135px;top:82px;height:20px;line-height:20px;font-size:13px;color:#d6f2ff"><span id="t26" style="letter-spacing:0.12px">手 数</span></div>
<div class="a" style="left:195.6px;top:82px;height:20px;line-height:20px;font-size:13px;color:#d6f2ff"><span id="t27" style="letter-spacing:0.03px">盈 亏</span></div>
<div class="a" style="left:259px;top:82px;height:20px;line-height:20px;font-size:13px;color:#d6f2ff"><span id="t28" style="letter-spacing:0.10px">盈利率</span></div>
<div class="a" style="left:326px;top:82px;height:20px;line-height:20px;font-size:13px;color:#d6f2ff"><span id="t29" style="letter-spacing:-0.00px">最大手数</span></div>
<div class="a" style="left:403px;top:82px;height:20px;line-height:20px;font-size:13px;color:#d6f2ff"><span id="t30" style="letter-spacing:-0.20px">占保证金</span></div>
<div class="a" style="left:478.5px;top:82px;height:20px;line-height:20px;font-size:13px;color:#d6f2ff"><span id="t31" style="letter-spacing:-0.00px">仓位比例</span></div>
<div class="a" style="left:554.5px;top:82px;height:20px;line-height:20px;font-size:13px;color:#d6f2ff"><span id="t32" style="letter-spacing:-0.17px">出入金</span></div>
<div class="a" style="left:629.4px;top:82px;height:20px;line-height:20px;font-size:13px;color:#d6f2ff"><span id="t33" style="letter-spacing:0.16px">余 额</span></div>
<div class="d g" style="left:19.3px;top:110.3px">03.14</div>
<div class="d g" style="left:79.3px;top:110.3px">0</div>
<div class="d g" style="left:135.4px;top:110.3px">0.00</div>
<div class="d g" style="left:191.2px;top:110.3px">0.00</div>
<div class="d g" style="left:259px;top:110.3px">0.16%</div>
<div class="d g" style="left:326px;top:110.3px">0.00</div>
<div class="d g" style="left:403px;top:110.3px">35.02</div>
<div class="d g" style="left:478px;top:110.3px">0.66%</div>
<div class="d g" style="left:554.5px;top:110.3px">0.00</div>
<div class="d g" style="left:621px;top:110.3px">5270.89</div>
<div class="d" style="left:19.3px;top:126.3px">03.13</div>
<div class="d" style="left:79.3px;top:126.3px">18</div>
<div class="d" style="left:135.4px;top:126.3px">0.18</div>
<div class="d" style="left:191.2px;top:126.3px">8.06</div>
<div class="d" style="left:259px;top:126.3px">0.16%</div>
<div class="d" style="left:326px;top:126.3px">0.01</div>
<div class="d" style="left:403px;top:126.3px">35.02</div>
<div class="d" style="left:478px;top:126.3px">0.66%</div>
<div class="d g" style="left:554.5px;top:126.3px">0.00</div>
<div class="d" style="left:621px;top:126.3px">5270.89</div>
<div class="d" style="left:19.3px;top:142.3px">03.12</div>
<div class="d" style="left:79.3px;top:142.3px">40</div>
<div class="d" style="left:135.4px;top:142.3px">0.66</div>
<div class="d" style="left:191.2px;top:142.3px">52.84</div>
<div class="d" style="left:259px;top:142.3px">1.06%</div>
<div class="d" style="left:326px;top:142.3px">0.06</div>
<div class="d" style="left:403px;top:142.3px">78.65</div>
<div class="d" style="left:478px;top:142.3px">1.51%</div>
<div class="d g" style="left:554.5px;top:142.3px">0.00</div>
<div class="d" style="left:621px;top:142.3px">5262.83</div>
<div class="d" style="left:19.3px;top:158.3px">03.11</div>
<div class="d" style="left:79.3px;top:158.3px">12</div>
<div class="d" style="left:135.4px;top:158.3px">0.12</div>
<div class="d" style="left:191.2px;top:158.3px">4.84</div>
<div class="d" style="left:259px;top:158.3px">0.10%</div>
<div class="d" style="left:326px;top:158.3px">0.01</div>
<div class="d" style="left:403px;top:158.3px">50.29</div>
<div class="d" style="left:478px;top:158.3px">0.97%</div>
<div class="d g" style="left:554.5px;top:158.3px">0.00</div>
<div class="d" style="left:621px;top:158.3px">5209.99</div>
<div class="d" style="left:19.3px;top:174.3px">03.08</div>
<div class="d" style="left:79.3px;top:174.3px">38</div>
<div class="d" style="left:135.4px;top:174.3px">0.75</div>
<div class="d" style="left:191.2px;top:174.3px">69.06</div>
<div class="d" style="left:259px;top:174.3px">1.38%</div>
<div class="d" style="left:326px;top:174.3px">0.07</div>
<div class="d" style="left:403px;top:174.3px">69.96</div>
<div class="d" style="left:478px;top:174.3px">1.36%</div>
<div class="d g" style="left:554.5px;top:174.3px">0.00</div>
<div class="d" style="left:621px;top:174.3px">5205.15</div>
<div class="d" style="left:19.3px;top:190.3px">03.07</div>
<div class="d" style="left:79.3px;top:190.3px">30</div>
<div class="d" style="left:135.4px;top:190.3px">0.47</div>
<div class="d" style="left:191.2px;top:190.3px">39.03</div>
<div class="d" style="left:259px;top:190.3px">0.78%</div>
<div class="d" style="left:326px;top:190.3px">0.04</div>
<div class="d" style="left:403px;top:190.3px">91.82</div>
<div class="d" style="left:478px;top:190.3px">1.79%</div>
<div class="d g" style="left:554.5px;top:190.3px">0.00</div>
<div class="d" style="left:621px;top:190.3px">5136.09</div>
<div class="d" style="left:19.3px;top:206.3px">03.06</div>
<div class="d" style="left:79.3px;top:206.3px">21</div>
<div class="d" style="left:135.4px;top:206.3px">0.25</div>
<div class="d" style="left:191.2px;top:206.3px">17.10</div>
<div class="d" style="left:259px;top:206.3px">0.34%</div>
<div class="d" style="left:326px;top:206.3px">0.02</div>
<div class="d" style="left:403px;top:206.3px">0.00</div>
<div class="d" style="left:478px;top:206.3px">0.00%</div>
<div class="d g" style="left:554.5px;top:206.3px">0.00</div>
<div class="d" style="left:621px;top:206.3px">5097.06</div>
<div class="d" style="left:19.3px;top:222.3px">03.05</div>
<div class="d" style="left:79.3px;top:222.3px">4</div>
<div class="d" style="left:135.4px;top:222.3px">0.04</div>
<div class="d" style="left:191.2px;top:222.3px">3.05</div>
<div class="d" style="left:259px;top:222.3px">0.06%</div>
<div class="d" style="left:326px;top:222.3px">0.01</div>
<div class="d" style="left:403px;top:222.3px">0.00</div>
<div class="d" style="left:478px;top:222.3px">0.00%</div>
<div class="d g" style="left:554.5px;top:222.3px">0.00</div>
<div class="d" style="left:621px;top:222.3px">5079.96</div>
<div class="d" style="left:19.3px;top:238.3px">03.04</div>
<div class="d" style="left:79.3px;top:238.3px">10</div>
<div class="d" style="left:135.4px;top:238.3px">0.10</div>
<div class="d" style="left:191.2px;top:238.3px">4.49</div>
<div class="d" style="left:259px;top:238.3px">0.09%</div>
<div class="d" style="left:326px;top:238.3px">0.01</div>
<div class="d" style="left:403px;top:238.3px">0.00</div>
<div class="d" style="left:478px;top:238.3px">0.00%</div>
<div class="d g" style="left:554.5px;top:238.3px">0.00</div>
<div class="d" style="left:621px;top:238.3px">5076.91</div>
<div class="d" style="left:19.3px;top:254.3px">03.01</div>
<div class="d" style="left:79.3px;top:254.3px">24</div>
<div class="d" style="left:135.4px;top:254.3px">0.27</div>
<div class="d" style="left:191.2px;top:254.3px">23.99</div>
<div class="d" style="left:259px;top:254.3px">0.48%</div>
<div class="d" style="left:326px;top:254.3px">0.02</div>
<div class="d" style="left:403px;top:254.3px">0.00</div>
<div class="d" style="left:478px;top:254.3px">0.00%</div>
<div class="d g" style="left:554.5px;top:254.3px">0.00</div>
<div class="d" style="left:621px;top:254.3px">5072.42</div>
<div class="d" style="left:19.3px;top:270.3px">02.29</div>
<div class="d" style="left:79.3px;top:270.3px">21</div>
<div class="d" style="left:135.4px;top:270.3px">0.26</div>
<div class="d" style="left:191.2px;top:270.3px">18.12</div>
<div class="d" style="left:259px;top:270.3px">0.36%</div>
<div class="d" style="left:326px;top:270.3px">0.03</div>
<div class="d" style="left:403px;top:270.3px">0.00</div>
<div class="d" style="left:478px;top:270.3px">0.00%</div>
<div class="d g" style="left:554.5px;top:270.3px">0.00</div>
<div class="d" style="left:621px;top:270.3px">5048.43</div>
<div class="d" style="left:19.3px;top:286.3px">02.28</div>
<div class="d" style="left:79.3px;top:286.3px">19</div>
<div class="d" style="left:135.4px;top:286.3px">0.24</div>
<div class="d" style="left:191.2px;top:286.3px">16.77</div>
<div class="d" style="left:259px;top:286.3px">0.34%</div>
<div class="d" style="left:326px;top:286.3px">0.03</div>
<div class="d" style="left:403px;top:286.3px">0.00</div>
<div class="d" style="left:478px;top:286.3px">0.00%</div>
<div class="d g" style="left:554.5px;top:286.3px">0.00</div>
<div class="d" style="left:621px;top:286.3px">5030.31</div>
<div class="d" style="left:19.3px;top:302.3px">02.27</div>
<div class="d" style="left:79.3px;top:302.3px">12</div>
<div class="d" style="left:135.4px;top:302.3px">0.13</div>
<div class="d" style="left:191.2px;top:302.3px">11.04</div>
<div class="d" style="left:259px;top:302.3px">0.22%</div>
<div class="d" style="left:326px;top:302.3px">0.02</div>
<div class="d" style="left:403px;top:302.3px">0.00</div>
<div class="d" style="left:478px;top:302.3px">0.00%</div>
<div class="d g" style="left:554.5px;top:302.3px">0.00</div>
<div class="d" style="left:621px;top:302.3px">5013.54</div>
<div class="d" style="left:19.3px;top:318.3px">02.26</div>
<div class="d" style="left:79.3px;top:318.3px">7</div>
<div class="d" style="left:135.4px;top:318.3px">0.07</div>
<div class="d" style="left:191.2px;top:318.3px">2.50</div>
<div class="d" style="left:259px;top:318.3px">0.05%</div>
<div class="d" style="left:326px;top:318.3px">0.01</div>
<div class="d" style="left:403px;top:318.3px">0.00</div>
<div class="d" style="left:478px;top:318.3px">0.00%</div>
<div class="d" style="left:554.5px;top:318.3px">5000.00</div>
<div class="d" style="left:621px;top:318.3px">5002.50</div>
</div>
<div class="a" style="left:337px;top:142px;width:15px;height:19.500px;border:1px solid #223c4b;background:#03080d"></div>
<div class="a" style="left:337px;top:164.500px;width:15px;height:19.500px;border:1px solid #223c4b;background:#03080d"></div>
<svg class="a" style="left:339.500px;top:148.500px" width="10" height="9" viewBox="0 0 10 9"><path d="M5 .3l4.700 8.400H.3z" fill="#fff"/></svg>
<svg class="a" style="left:339.500px;top:170px" width="10" height="9" viewBox="0 0 10 9"><path d="M5 8.700L.3 .3h9.400z" fill="#fff"/></svg>
<div class="side" style="left:331.500px;top:210px;width:24px;height:21.500px;line-height:22px;background:#0c4060;border-color:#1d5474;border-right:none;border-radius:2px 0 0 2px;font-size:13.500px">日</div>
<div class="side" style="left:331.500px;top:238px;width:24px;height:21.500px;line-height:22px;background:#03080d;border-color:#223c4b;border-right:none;border-radius:2px 0 0 2px;font-size:13.500px">周</div>
<div class="side" style="left:331.500px;top:266.2px;width:24px;height:21.500px;line-height:22px;background:#03080d;border-color:#223c4b;border-right:none;border-radius:2px 0 0 2px;font-size:13.500px">月</div>
<div class="side" style="left:331.500px;top:294.3px;width:24px;height:21.500px;line-height:22px;background:#03080d;border-color:#223c4b;border-right:none;border-radius:2px 0 0 2px;font-size:13.500px">年</div>
<div class="side" style="left:322px;top:322.4px;width:33px;height:21.500px;line-height:22.500px;background:#03080d;border-color:#223c4b;border-right:none;border-radius:2px 0 0 2px;font-size:13px">品种</div>
<div class="side" style="left:322px;top:350.4px;width:33px;height:21.500px;line-height:22.500px;background:#03080d;border-color:#223c4b;border-right:none;border-radius:2px 0 0 2px;font-size:13px">魔号</div>
<div class="side" style="left:322px;top:378.4px;width:33px;height:21.500px;line-height:22.500px;background:#03080d;border-color:#223c4b;border-right:none;border-radius:2px 0 0 2px;font-size:13px">持仓</div>
<div class="side" style="left:322px;top:406.4px;width:33px;height:21.500px;line-height:22.500px;background:#03080d;border-color:#223c4b;border-right:none;border-radius:2px 0 0 2px;font-size:13px">属性</div>
<div class="a" style="left:322px;top:434.400px;width:33px;height:2px;border-top:1px solid #223c4b;border-left:1px solid #223c4b;background:#03080d"></div>
<div class="a" style="left:354px;top:141px;width:1px;height:295px;background:#223c4b"></div>
<div class="a" style="left:1053px;top:141px;width:1px;height:295px;background:#3f6080"></div>
<div class="a" style="left:308px;top:460px;width:1568px;height:33px;background:#f0f0f0"></div>
<div class="a" style="left:313px;top:460px;width:1563px;height:1px;background:#fff"></div>
<div class="a" style="left:313px;top:462px;width:1563px;height:1px;background:#222"></div>
<div class="a" style="left:554px;top:462px;width:124px;height:24px;background:#fff;border:1px solid #222;border-top:1px solid #fff;border-bottom:2px solid #222"></div>
<div class="a u" style="left:331.600px;top:464px;height:22px;line-height:22px;color:#777"><span id="t34" style="letter-spacing:-0.15px">EURUSD,H4</span></div>
<div class="a u" style="left:443.900px;top:464px;height:22px;line-height:22px;color:#777"><span id="t35" style="letter-spacing:-0.04px">EURUSD,M30</span></div>
<div class="a u" style="left:567.600px;top:464px;height:22px;line-height:22px;color:#111"><span id="t36" style="letter-spacing:-0.04px">EURUSD,M30</span></div>
<div class="a" style="left:431px;top:466px;width:1px;height:17px;background:#888"></div>
<svg class="a" style="left:1838px;top:468px" width="8" height="10" viewBox="0 0 8 10"><path d="M6 0v10L1 5z" fill="#999"/></svg>
<svg class="a" style="left:1861px;top:468px" width="8" height="10" viewBox="0 0 8 10"><path d="M2 0v10l5-5z" fill="#999"/></svg>
<div class="a" style="left:0;top:492px;width:1876px;height:405px;background:#fff"></div>
<div class="a" style="left:0;top:492px;width:1876px;height:1px;background:#bdbdbd"></div>
<div class="hc" style="left:-13px;top:493px;text-align:left">订单</div>
<div class="a" style="left:132px;top:494px;width:1px;height:25px;background:#e0e0e0"></div>
<div class="hc" style="left:132px;top:493px;width:206px">时间</div>
<div class="a" style="left:343px;top:494px;width:1px;height:25px;background:#e0e0e0"></div>
<div class="hc" style="left:343px;top:493px;width:99px">类型</div>
<div class="a" style="left:447px;top:494px;width:1px;height:25px;background:#e0e0e0"></div>
<div class="hc" style="left:447px;top:493px;width:78px">手数</div>
<div class="a" style="left:530px;top:494px;width:1px;height:25px;background:#e0e0e0"></div>
<div class="hc" style="left:530px;top:493px;width:80px">交易品种</div>
<svg class="a" style="left:620px;top:502px" width="6" height="7" viewBox="0 0 6 7"><path d="M1 6L5 1" stroke="#999" stroke-width="1"/></svg>
<div class="a" style="left:635px;top:494px;width:1px;height:25px;background:#e0e0e0"></div>
<div class="hc" style="left:635px;top:493px;width:112px">价格</div>
<div class="a" style="left:752px;top:494px;width:1px;height:25px;background:#e0e0e0"></div>
<div class="hc" style="left:752px;top:493px;width:112px">止损</div>
<div class="a" style="left:869px;top:494px;width:1px;height:25px;background:#e0e0e0"></div>
<div class="hc" style="left:869px;top:493px;width:112px">止盈</div>
<div class="a" style="left:986px;top:494px;width:1px;height:25px;background:#e0e0e0"></div>
<div class="hc" style="left:986px;top:493px;width:112px">价格</div>
<div class="a" style="left:1103px;top:494px;width:1px;height:25px;background:#e0e0e0"></div>
<div class="hc" style="left:1103px;top:493px;width:112px">手续费</div>
<div class="a" style="left:1220px;top:494px;width:1px;height:25px;background:#e0e0e0"></div>
<div class="hc" style="left:1220px;top:493px;width:112px">库存费</div>
<div class="a" style="left:1337px;top:494px;width:1px;height:25px;background:#e0e0e0"></div>
<div class="hc" style="left:1337px;top:493px;width:171px">获利</div>
<div class="a" style="left:1513px;top:494px;width:1px;height:25px;background:#e0e0e0"></div>
<div class="hc" style="left:1513px;top:493px;width:355px">注释</div>
<div class="a" style="left:1873px;top:494px;width:1px;height:25px;background:#e0e0e0"></div>
<div class="a" style="left:0;top:519px;width:1876px;height:1px;background:#cacaca"></div>
<div class="a" style="left:0;top:520px;width:1876px;height:25px;background:#fff;border-bottom:1px solid #c6c6c6"></div>
<div class="cell" style="left:9px;top:520px;text-align:left">168832644</div>
<div class="a" style="left:132px;top:520px;width:1px;height:25px;background:#d6d6d6"></div>
<div class="cell" style="left:132px;top:520px;width:207px">2024.03.12 21:00:03</div>
<div class="a" style="left:343px;top:520px;width:1px;height:25px;background:#d6d6d6"></div>
<div class="cell" style="left:343px;top:520px;width:100px">sell</div>
<div class="a" style="left:447px;top:520px;width:1px;height:25px;background:#d6d6d6"></div>
<div class="cell" style="left:447px;top:520px;width:79px">0.01</div>
<div class="a" style="left:530px;top:520px;width:1px;height:25px;background:#d6d6d6"></div>
<div class="cell" style="left:530px;top:520px;width:101px">eurusd</div>
<div class="a" style="left:635px;top:520px;width:1px;height:25px;background:#d6d6d6"></div>
<div class="cell" style="left:635px;top:520px;width:113px">1.09186</div>
<div class="a" style="left:752px;top:520px;width:1px;height:25px;background:#d6d6d6"></div>
<div class="cell" style="left:752px;top:520px;width:113px">0.00000</div>
<div class="a" style="left:869px;top:520px;width:1px;height:25px;background:#d6d6d6"></div>
<div class="cell" style="left:869px;top:520px;width:113px">1.09330</div>
<div class="a" style="left:986px;top:520px;width:1px;height:25px;background:#d6d6d6"></div>
<div class="cell" style="left:986px;top:520px;width:113px">1.09506</div>
<div class="a" style="left:1103px;top:520px;width:1px;height:25px;background:#d6d6d6"></div>
<div class="cell" style="left:1103px;top:520px;width:113px">0.00</div>
<div class="a" style="left:1220px;top:520px;width:1px;height:25px;background:#d6d6d6"></div>
<div class="cell" style="left:1220px;top:520px;width:113px">0.09</div>
<div class="a" style="left:1337px;top:520px;width:1px;height:25px;background:#d6d6d6"></div>
<div class="cell" style="left:1337px;top:520px;width:147px">-3.20</div>
<svg class="a" style="left:1494px;top:525px" width="14" height="14" viewBox="0 0 14 14"><path d="M1.500 1.500l11 11M12.500 1.500l-11 11" stroke="#8c8c8c" stroke-width="1.900"/></svg>
<div class="a" style="left:1513px;top:520px;width:1px;height:25px;background:#d6d6d6"></div>
<div class="cell" style="left:1513px;top:520px;width:355px"><span style="font-size:15px">飞翼</span><span id="t37" style="letter-spacing:-0.45px">EA</span></div>
<div class="a" style="left:1873px;top:520px;width:1px;height:25px;background:#d6d6d6"></div>
<div class="a" style="left:-7px;top:529px;width:9px;height:12px;border-radius:50%;background:#c0452a"></div>
<div class="a" style="left:0;top:545px;width:1876px;height:25px;background:#ebebeb;border-bottom:1px solid #c6c6c6"></div>
<div class="cell" style="left:9px;top:545px;text-align:left">168843950</div>
<div class="a" style="left:132px;top:545px;width:1px;height:25px;background:#d6d6d6"></div>
<div class="cell" style="left:132px;top:545px;width:207px">2024.03.13 01:03:02</div>
<div class="a" style="left:343px;top:545px;width:1px;height:25px;background:#d6d6d6"></div>
<div class="cell" style="left:343px;top:545px;width:100px">sell</div>
<div class="a" style="left:447px;top:545px;width:1px;height:25px;background:#d6d6d6"></div>
<div class="cell" style="left:447px;top:545px;width:79px">0.01</div>
<div class="a" style="left:530px;top:545px;width:1px;height:25px;background:#d6d6d6"></div>
<div class="cell" style="left:530px;top:545px;width:101px">eurusd</div>
<div class="a" style="left:635px;top:545px;width:1px;height:25px;background:#d6d6d6"></div>
<div class="cell" style="left:635px;top:545px;width:113px">1.09268</div>
<div class="a" style="left:752px;top:545px;width:1px;height:25px;background:#d6d6d6"></div>
<div class="cell" style="left:752px;top:545px;width:113px">0.00000</div>
<div class="a" style="left:869px;top:545px;width:1px;height:25px;background:#d6d6d6"></div>
<div class="cell" style="left:869px;top:545px;width:113px">1.09330</div>
<div class="a" style="left:986px;top:545px;width:1px;height:25px;background:#d6d6d6"></div>
<div class="cell" style="left:986px;top:545px;width:113px">1.09506</div>
<div class="a" style="left:1103px;top:545px;width:1px;height:25px;background:#d6d6d6"></div>
<div class="cell" style="left:1103px;top:545px;width:113px">0.00</div>
<div class="a" style="left:1220px;top:545px;width:1px;height:25px;background:#d6d6d6"></div>
<div class="cell" style="left:1220px;top:545px;width:113px">0.07</div>
<div class="a" style="left:1337px;top:545px;width:1px;height:25px;background:#d6d6d6"></div>
<div class="cell" style="left:1337px;top:545px;width:147px">-2.38</div>
<svg class="a" style="left:1494px;top:550px" width="14" height="14" viewBox="0 0 14 14"><path d="M1.500 1.500l11 11M12.500 1.500l-11 11" stroke="#8c8c8c" stroke-width="1.900"/></svg>
<div class="a" style="left:1513px;top:545px;width:1px;height:25px;background:#d6d6d6"></div>
<div class="cell" style="left:1513px;top:545px;width:355px"><span style="font-size:15px">飞翼</span><span id="t38" style="letter-spacing:-0.45px">EA</span></div>
<div class="a" style="left:1873px;top:545px;width:1px;height:25px;background:#d6d6d6"></div>
<div class="a" style="left:-7px;top:554px;width:9px;height:12px;border-radius:50%;background:#c0452a"></div>
<div class="a" style="left:0;top:570px;width:1876px;height:25px;background:#fff;border-bottom:1px solid #c6c6c6"></div>
<div class="cell" style="left:9px;top:570px;text-align:left">168843955</div>
<div class="a" style="left:132px;top:570px;width:1px;height:25px;background:#d6d6d6"></div>
<div class="cell" style="left:132px;top:570px;width:207px">2024.03.13 01:03:03</div>
<div class="a" style="left:343px;top:570px;width:1px;height:25px;background:#d6d6d6"></div>
<div class="cell" style="left:343px;top:570px;width:100px">sell</div>
<div class="a" style="left:447px;top:570px;width:1px;height:25px;background:#d6d6d6"></div>
<div class="cell" style="left:447px;top:570px;width:79px">0.01</div>
<div class="a" style="left:530px;top:570px;width:1px;height:25px;background:#d6d6d6"></div>
<div class="cell" style="left:530px;top:570px;width:101px">eurusd</div>
<div class="a" style="left:635px;top:570px;width:1px;height:25px;background:#d6d6d6"></div>
<div class="cell" style="left:635px;top:570px;width:113px">1.09268</div>
<div class="a" style="left:752px;top:570px;width:1px;height:25px;background:#d6d6d6"></div>
<div class="cell" style="left:752px;top:570px;width:113px">0.00000</div>
<div class="a" style="left:869px;top:570px;width:1px;height:25px;background:#d6d6d6"></div>
<div class="cell" style="left:869px;top:570px;width:113px">1.09330</div>
<div class="a" style="left:986px;top:570px;width:1px;height:25px;background:#d6d6d6"></div>
<div class="cell" style="left:986px;top:570px;width:113px">1.09506</div>
<div class="a" style="left:1103px;top:570px;width:1px;height:25px;background:#d6d6d6"></div>
<div class="cell" style="left:1103px;top:570px;width:113px">0.00</div>
<div class="a" style="left:1220px;top:570px;width:1px;height:25px;background:#d6d6d6"></div>
<div class="cell" style="left:1220px;top:570px;width:113px">0.07</div>
<div class="a" style="left:1337px;top:570px;width:1px;height:25px;background:#d6d6d6"></div>
<div class="cell" style="left:1337px;top:570px;width:147px">-2.38</div>
<svg class="a" style="left:1494px;top:575px" width="14" height="14" viewBox="0 0 14 14"><path d="M1.500 1.500l11 11M12.500 1.500l-11 11" stroke="#8c8c8c" stroke-width="1.900"/></svg>
<div class="a" style="left:1513px;top:570px;width:1px;height:25px;background:#d6d6d6"></div>
<div class="cell" style="left:1513px;top:570px;width:355px"><span style="font-size:15px">飞翼</span><span id="t39" style="letter-spacing:-0.45px">EA</span></div>
<div class="a" style="left:1873px;top:570px;width:1px;height:25px;background:#d6d6d6"></div>
<div class="a" style="left:-7px;top:579px;width:9px;height:12px;border-radius:50%;background:#c0452a"></div>
<div class="a" style="left:0;top:595px;width:1876px;height:25px;background:#ebebeb;border-bottom:1px solid #c6c6c6"></div>
<div class="cell" style="left:9px;top:595px;text-align:left">168903150</div>
<div class="a" style="left:132px;top:595px;width:1px;height:25px;background:#d6d6d6"></div>
<div class="cell" style="left:132px;top:595px;width:207px">2024.03.13 14:19:25</div>
<div class="a" style="left:343px;top:595px;width:1px;height:25px;background:#d6d6d6"></div>
<div class="cell" style="left:343px;top:595px;width:100px">sell</div>
<div class="a" style="left:447px;top:595px;width:1px;height:25px;background:#d6d6d6"></div>
<div class="cell" style="left:447px;top:595px;width:79px">0.02</div>
<div class="a" style="left:530px;top:595px;width:1px;height:25px;background:#d6d6d6"></div>
<div class="cell" style="left:530px;top:595px;width:101px">eurusd</div>
<div class="a" style="left:635px;top:595px;width:1px;height:25px;background:#d6d6d6"></div>
<div class="cell" style="left:635px;top:595px;width:113px">1.09351</div>
<div class="a" style="left:752px;top:595px;width:1px;height:25px;background:#d6d6d6"></div>
<div class="cell" style="left:752px;top:595px;width:113px">0.00000</div>
<div class="a" style="left:869px;top:595px;width:1px;height:25px;background:#d6d6d6"></div>
<div class="cell" style="left:869px;top:595px;width:113px">1.09330</div>
<div class="a" style="left:986px;top:595px;width:1px;height:25px;background:#d6d6d6"></div>
<div class="cell" style="left:986px;top:595px;width:113px">1.09506</div>
<div class="a" style="left:1103px;top:595px;width:1px;height:25px;background:#d6d6d6"></div>
<div class="cell" style="left:1103px;top:595px;width:113px">0.00</div>
<div class="a" style="left:1220px;top:595px;width:1px;height:25px;background:#d6d6d6"></div>
<div class="cell" style="left:1220px;top:595px;width:113px">0.13</div>
<div class="a" style="left:1337px;top:595px;width:1px;height:25px;background:#d6d6d6"></div>
<div class="cell" style="left:1337px;top:595px;width:147px">-3.10</div>
<svg class="a" style="left:1494px;top:600px" width="14" height="14" viewBox="0 0 14 14"><path d="M1.500 1.500l11 11M12.500 1.500l-11 11" stroke="#8c8c8c" stroke-width="1.900"/></svg>
<div class="a" style="left:1513px;top:595px;width:1px;height:25px;background:#d6d6d6"></div>
<div class="cell" style="left:1513px;top:595px;width:355px"><span style="font-size:15px">飞翼</span><span id="t40" style="letter-spacing:-0.45px">EA</span></div>
<div class="a" style="left:1873px;top:595px;width:1px;height:25px;background:#d6d6d6"></div>
<div class="a" style="left:-7px;top:604px;width:9px;height:12px;border-radius:50%;background:#c0452a"></div>
<div class="a" style="left:0;top:620px;width:1876px;height:25px;background:#fff;border-bottom:1px solid #c6c6c6"></div>
<div class="cell" style="left:9px;top:620px;text-align:left">168903151</div>
<div class="a" style="left:132px;top:620px;width:1px;height:25px;background:#d6d6d6"></div>
<div class="cell" style="left:132px;top:620px;width:207px">2024.03.13 14:19:25</div>
<div class="a" style="left:343px;top:620px;width:1px;height:25px;background:#d6d6d6"></div>
<div class="cell" style="left:343px;top:620px;width:100px">sell</div>
<div class="a" style="left:447px;top:620px;width:1px;height:25px;background:#d6d6d6"></div>
<div class="cell" style="left:447px;top:620px;width:79px">0.02</div>
<div class="a" style="left:530px;top:620px;width:1px;height:25px;background:#d6d6d6"></div>
<div class="cell" style="left:530px;top:620px;width:101px">eurusd</div>
<div class="a" style="left:635px;top:620px;width:1px;height:25px;background:#d6d6d6"></div>
<div class="cell" style="left:635px;top:620px;width:113px">1.09351</div>
<div class="a" style="left:752px;top:620px;width:1px;height:25px;background:#d6d6d6"></div>
<div class="cell" style="left:752px;top:620px;width:113px">0.00000</div>
<div class="a" style="left:869px;top:620px;width:1px;height:25px;background:#d6d6d6"></div>
<div class="cell" style="left:869px;top:620px;width:113px">1.09330</div>
<div class="a" style="left:986px;top:620px;width:1px;height:25px;background:#d6d6d6"></div>
<div class="cell" style="left:986px;top:620px;width:113px">1.09506</div>
<div class="a" style="left:1103px;top:620px;width:1px;height:25px;background:#d6d6d6"></div>
<div class="cell" style="left:1103px;top:620px;width:113px">0.00</div>
<div class="a" style="left:1220px;top:620px;width:1px;height:25px;background:#d6d6d6"></div>
<div class="cell" style="left:1220px;top:620px;width:113px">0.13</div>
<div class="a" style="left:1337px;top:620px;width:1px;height:25px;background:#d6d6d6"></div>
<div class="cell" style="left:1337px;top:620px;width:147px">-3.10</div>
<svg class="a" style="left:1494px;top:625px" width="14" height="14" viewBox="0 0 14 14"><path d="M1.500 1.500l11 11M12.500 1.500l-11 11" stroke="#8c8c8c" stroke-width="1.900"/></svg>
<div class="a" style="left:1513px;top:620px;width:1px;height:25px;background:#d6d6d6"></div>
<div class="cell" style="left:1513px;top:620px;width:355px"><span style="font-size:15px">飞翼</span><span id="t41" style="letter-spacing:-0.45px">EA</span></div>
<div class="a" style="left:1873px;top:620px;width:1px;height:25px;background:#d6d6d6"></div>
<div class="a" style="left:-7px;top:629px;width:9px;height:12px;border-radius:50%;background:#c0452a"></div>
<div class="a" style="left:0;top:645px;width:1876px;height:25px;background:#ebebeb;border-bottom:1px solid #c6c6c6"></div>
<div class="cell" style="left:9px;top:645px;text-align:left">168905413</div>
<div class="a" style="left:132px;top:645px;width:1px;height:25px;background:#d6d6d6"></div>
<div class="cell" style="left:132px;top:645px;width:207px">2024.03.13 14:51:16</div>
<div class="a" style="left:343px;top:645px;width:1px;height:25px;background:#d6d6d6"></div>
<div class="cell" style="left:343px;top:645px;width:100px">sell</div>
<div class="a" style="left:447px;top:645px;width:1px;height:25px;background:#d6d6d6"></div>
<div class="cell" style="left:447px;top:645px;width:79px">0.02</div>
<div class="a" style="left:530px;top:645px;width:1px;height:25px;background:#d6d6d6"></div>
<div class="cell" style="left:530px;top:645px;width:101px">eurusd</div>
<div class="a" style="left:635px;top:645px;width:1px;height:25px;background:#d6d6d6"></div>
<div class="cell" style="left:635px;top:645px;width:113px">1.09447</div>
<div class="a" style="left:752px;top:645px;width:1px;height:25px;background:#d6d6d6"></div>
<div class="cell" style="left:752px;top:645px;width:113px">0.00000</div>
<div class="a" style="left:869px;top:645px;width:1px;height:25px;background:#d6d6d6"></div>
<div class="cell" style="left:869px;top:645px;width:113px">1.09330</div>
<div class="a" style="left:986px;top:645px;width:1px;height:25px;background:#d6d6d6"></div>
<div class="cell" style="left:986px;top:645px;width:113px">1.09506</div>
<div class="a" style="left:1103px;top:645px;width:1px;height:25px;background:#d6d6d6"></div>
<div class="cell" style="left:1103px;top:645px;width:113px">0.00</div>
<div class="a" style="left:1220px;top:645px;width:1px;height:25px;background:#d6d6d6"></div>
<div class="cell" style="left:1220px;top:645px;width:113px">0.13</div>
<div class="a" style="left:1337px;top:645px;width:1px;height:25px;background:#d6d6d6"></div>
<div class="cell" style="left:1337px;top:645px;width:147px">-1.18</div>
<svg class="a" style="left:1494px;top:650px" width="14" height="14" viewBox="0 0 14 14"><path d="M1.500 1.500l11 11M12.500 1.500l-11 11" stroke="#8c8c8c" stroke-width="1.900"/></svg>
<div class="a" style="left:1513px;top:645px;width:1px;height:25px;background:#d6d6d6"></div>
<div class="cell" style="left:1513px;top:645px;width:355px"><span style="font-size:15px">飞翼</span><span id="t42" style="letter-spacing:-0.45px">EA</span></div>
<div class="a" style="left:1873px;top:645px;width:1px;height:25px;background:#d6d6d6"></div>
<div class="a" style="left:-7px;top:654px;width:9px;height:12px;border-radius:50%;background:#c0452a"></div>
<div class="a" style="left:0;top:670px;width:1876px;height:25px;background:#fff;border-bottom:1px solid #c6c6c6"></div>
<div class="cell" style="left:9px;top:670px;text-align:left">168905414</div>
<div class="a" style="left:132px;top:670px;width:1px;height:25px;background:#d6d6d6"></div>
<div class="cell" style="left:132px;top:670px;width:207px">2024.03.13 14:51:16</div>
<div class="a" style="left:343px;top:670px;width:1px;height:25px;background:#d6d6d6"></div>
<div class="cell" style="left:343px;top:670px;width:100px">sell</div>
<div class="a" style="left:447px;top:670px;width:1px;height:25px;background:#d6d6d6"></div>
<div class="cell" style="left:447px;top:670px;width:79px">0.02</div>
<div class="a" style="left:530px;top:670px;width:1px;height:25px;background:#d6d6d6"></div>
<div class="cell" style="left:530px;top:670px;width:101px">eurusd</div>
<div class="a" style="left:635px;top:670px;width:1px;height:25px;background:#d6d6d6"></div>
<div class="cell" style="left:635px;top:670px;width:113px">1.09447</div>
<div class="a" style="left:752px;top:670px;width:1px;height:25px;background:#d6d6d6"></div>
<div class="cell" style="left:752px;top:670px;width:113px">0.00000</div>
<div class="a" style="left:869px;top:670px;width:1px;height:25px;background:#d6d6d6"></div>
<div class="cell" style="left:869px;top:670px;width:113px">1.09330</div>
<div class="a" style="left:986px;top:670px;width:1px;height:25px;background:#d6d6d6"></div>
<div class="cell" style="left:986px;top:670px;width:113px">1.09506</div>
<div class="a" style="left:1103px;top:670px;width:1px;height:25px;background:#d6d6d6"></div>
<div class="cell" style="left:1103px;top:670px;width:113px">0.00</div>
<div class="a" style="left:1220px;top:670px;width:1px;height:25px;background:#d6d6d6"></div>
<div class="cell" style="left:1220px;top:670px;width:113px">0.13</div>
<div class="a" style="left:1337px;top:670px;width:1px;height:25px;background:#d6d6d6"></div>
<div class="cell" style="left:1337px;top:670px;width:147px">-1.18</div>
<svg class="a" style="left:1494px;top:675px" width="14" height="14" viewBox="0 0 14 14"><path d="M1.500 1.500l11 11M12.500 1.500l-11 11" stroke="#8c8c8c" stroke-width="1.900"/></svg>
<div class="a" style="left:1513px;top:670px;width:1px;height:25px;background:#d6d6d6"></div>
<div class="cell" style="left:1513px;top:670px;width:355px"><span style="font-size:15px">飞翼</span><span id="t43" style="letter-spacing:-0.45px">EA</span></div>
<div class="a" style="left:1873px;top:670px;width:1px;height:25px;background:#d6d6d6"></div>
<div class="a" style="left:-7px;top:679px;width:9px;height:12px;border-radius:50%;background:#c0452a"></div>
<div class="a" style="left:0;top:695px;width:1876px;height:25px;background:#ebebeb;border-bottom:1px solid #c6c6c6"></div>
<div class="cell" style="left:9px;top:695px;text-align:left">168961235</div>
<div class="a" style="left:132px;top:695px;width:1px;height:25px;background:#d6d6d6"></div>
<div class="cell" style="left:132px;top:695px;width:207px">2024.03.13 20:02:00</div>
<div class="a" style="left:343px;top:695px;width:1px;height:25px;background:#d6d6d6"></div>
<div class="cell" style="left:343px;top:695px;width:100px">sell</div>
<div class="a" style="left:447px;top:695px;width:1px;height:25px;background:#d6d6d6"></div>
<div class="cell" style="left:447px;top:695px;width:79px">0.04</div>
<div class="a" style="left:530px;top:695px;width:1px;height:25px;background:#d6d6d6"></div>
<div class="cell" style="left:530px;top:695px;width:101px">eurusd</div>
<div class="a" style="left:635px;top:695px;width:1px;height:25px;background:#d6d6d6"></div>
<div class="cell" style="left:635px;top:695px;width:113px">1.09531</div>
<div class="a" style="left:752px;top:695px;width:1px;height:25px;background:#d6d6d6"></div>
<div class="cell" style="left:752px;top:695px;width:113px">0.00000</div>
<div class="a" style="left:869px;top:695px;width:1px;height:25px;background:#d6d6d6"></div>
<div class="cell" style="left:869px;top:695px;width:113px">1.09330</div>
<div class="a" style="left:986px;top:695px;width:1px;height:25px;background:#d6d6d6"></div>
<div class="cell" style="left:986px;top:695px;width:113px">1.09506</div>
<div class="a" style="left:1103px;top:695px;width:1px;height:25px;background:#d6d6d6"></div>
<div class="cell" style="left:1103px;top:695px;width:113px">0.00</div>
<div class="a" style="left:1220px;top:695px;width:1px;height:25px;background:#d6d6d6"></div>
<div class="cell" style="left:1220px;top:695px;width:113px">0.27</div>
<div class="a" style="left:1337px;top:695px;width:1px;height:25px;background:#d6d6d6"></div>
<div class="cell" style="left:1337px;top:695px;width:147px">1.00</div>
<svg class="a" style="left:1494px;top:700px" width="14" height="14" viewBox="0 0 14 14"><path d="M1.500 1.500l11 11M12.500 1.500l-11 11" stroke="#8c8c8c" stroke-width="1.900"/></svg>
<div class="a" style="left:1513px;top:695px;width:1px;height:25px;background:#d6d6d6"></div>
<div class="cell" style="left:1513px;top:695px;width:355px"><span style="font-size:15px">飞翼</span><span id="t44" style="letter-spacing:-0.45px">EA</span></div>
<div class="a" style="left:1873px;top:695px;width:1px;height:25px;background:#d6d6d6"></div>
<div class="a" style="left:-7px;top:704px;width:9px;height:12px;border-radius:50%;background:#c0452a"></div>
<div class="a" style="left:0;top:720px;width:1876px;height:25px;background:#fff;border-bottom:1px solid #c6c6c6"></div>
<div class="cell" style="left:9px;top:720px;text-align:left">168961237</div>
<div class="a" style="left:132px;top:720px;width:1px;height:25px;background:#d6d6d6"></div>
<div class="cell" style="left:132px;top:720px;width:207px">2024.03.13 20:02:00</div>
<div class="a" style="left:343px;top:720px;width:1px;height:25px;background:#d6d6d6"></div>
<div class="cell" style="left:343px;top:720px;width:100px">sell</div>
<div class="a" style="left:447px;top:720px;width:1px;height:25px;background:#d6d6d6"></div>
<div class="cell" style="left:447px;top:720px;width:79px">0.04</div>
<div class="a" style="left:530px;top:720px;width:1px;height:25px;background:#d6d6d6"></div>
<div class="cell" style="left:530px;top:720px;width:101px">eurusd</div>
<div class="a" style="left:635px;top:720px;width:1px;height:25px;background:#d6d6d6"></div>
<div class="cell" style="left:635px;top:720px;width:113px">1.09531</div>
<div class="a" style="left:752px;top:720px;width:1px;height:25px;background:#d6d6d6"></div>
<div class="cell" style="left:752px;top:720px;width:113px">0.00000</div>
<div class="a" style="left:869px;top:720px;width:1px;height:25px;background:#d6d6d6"></div>
<div class="cell" style="left:869px;top:720px;width:113px">1.09330</div>
<div class="a" style="left:986px;top:720px;width:1px;height:25px;background:#d6d6d6"></div>
<div class="cell" style="left:986px;top:720px;width:113px">1.09506</div>
<div class="a" style="left:1103px;top:720px;width:1px;height:25px;background:#d6d6d6"></div>
<div class="cell" style="left:1103px;top:720px;width:113px">0.00</div>
<div class="a" style="left:1220px;top:720px;width:1px;height:25px;background:#d6d6d6"></div>
<div class="cell" style="left:1220px;top:720px;width:113px">0.27</div>
<div class="a" style="left:1337px;top:720px;width:1px;height:25px;background:#d6d6d6"></div>
<div class="cell" style="left:1337px;top:720px;width:147px">1.00</div>
<svg class="a" style="left:1494px;top:725px" width="14" height="14" viewBox="0 0 14 14"><path d="M1.500 1.500l11 11M12.500 1.500l-11 11" stroke="#8c8c8c" stroke-width="1.900"/></svg>
<div class="a" style="left:1513px;top:720px;width:1px;height:25px;background:#d6d6d6"></div>
<div class="cell" style="left:1513px;top:720px;width:355px"><span style="font-size:15px">飞翼</span><span id="t45" style="letter-spacing:-0.45px">EA</span></div>
<div class="a" style="left:1873px;top:720px;width:1px;height:25px;background:#d6d6d6"></div>
<div class="a" style="left:-7px;top:729px;width:9px;height:12px;border-radius:50%;background:#c0452a"></div>
<div class="a" style="left:0;top:745px;width:1876px;height:25px;background:#ebebeb;border-bottom:1px solid #c6c6c6"></div>
<div class="cell" style="left:9px;top:745px;text-align:left">168969944</div>
<div class="a" style="left:132px;top:745px;width:1px;height:25px;background:#d6d6d6"></div>
<div class="cell" style="left:132px;top:745px;width:207px">2024.03.13 21:00:01</div>
<div class="a" style="left:343px;top:745px;width:1px;height:25px;background:#d6d6d6"></div>
<div class="cell" style="left:343px;top:745px;width:100px">buy</div>
<div class="a" style="left:447px;top:745px;width:1px;height:25px;background:#d6d6d6"></div>
<div class="cell" style="left:447px;top:745px;width:79px">0.01</div>
<div class="a" style="left:530px;top:745px;width:1px;height:25px;background:#d6d6d6"></div>
<div class="cell" style="left:530px;top:745px;width:101px">eurusd</div>
<div class="a" style="left:635px;top:745px;width:1px;height:25px;background:#d6d6d6"></div>
<div class="cell" style="left:635px;top:745px;width:113px">1.09578</div>
<div class="a" style="left:752px;top:745px;width:1px;height:25px;background:#d6d6d6"></div>
<div class="cell" style="left:752px;top:745px;width:113px">0.00000</div>
<div class="a" style="left:869px;top:745px;width:1px;height:25px;background:#d6d6d6"></div>
<div class="cell" style="left:869px;top:745px;width:113px">1.09622</div>
<div class="a" style="left:986px;top:745px;width:1px;height:25px;background:#d6d6d6"></div>
<div class="cell" style="left:986px;top:745px;width:113px">1.09490</div>
<div class="a" style="left:1103px;top:745px;width:1px;height:25px;background:#d6d6d6"></div>
<div class="cell" style="left:1103px;top:745px;width:113px">0.00</div>
<div class="a" style="left:1220px;top:745px;width:1px;height:25px;background:#d6d6d6"></div>
<div class="cell" style="left:1220px;top:745px;width:113px">-0.18</div>
<div class="a" style="left:1337px;top:745px;width:1px;height:25px;background:#d6d6d6"></div>
<div class="cell" style="left:1337px;top:745px;width:147px">-0.88</div>
<svg class="a" style="left:1494px;top:750px" width="14" height="14" viewBox="0 0 14 14"><path d="M1.500 1.500l11 11M12.500 1.500l-11 11" stroke="#8c8c8c" stroke-width="1.900"/></svg>
<div class="a" style="left:1513px;top:745px;width:1px;height:25px;background:#d6d6d6"></div>
<div class="cell" style="left:1513px;top:745px;width:355px"><span style="font-size:15px">飞翼</span><span id="t46" style="letter-spacing:-0.45px">EA</span></div>
<div class="a" style="left:1873px;top:745px;width:1px;height:25px;background:#d6d6d6"></div>
<div class="a" style="left:-7px;top:754px;width:9px;height:12px;border-radius:50%;background:#2a7fb0"></div>
<div class="a" style="left:0;top:770px;width:1876px;height:25px;background:#fff;border-bottom:1px solid #c6c6c6"></div>
<div class="cell" style="left:9px;top:770px;text-align:left">168973729</div>
<div class="a" style="left:132px;top:770px;width:1px;height:25px;background:#d6d6d6"></div>
<div class="cell" style="left:132px;top:770px;width:207px">2024.03.13 22:16:53</div>
<div class="a" style="left:343px;top:770px;width:1px;height:25px;background:#d6d6d6"></div>
<div class="cell" style="left:343px;top:770px;width:100px">buy</div>
<div class="a" style="left:447px;top:770px;width:1px;height:25px;background:#d6d6d6"></div>
<div class="cell" style="left:447px;top:770px;width:79px">0.01</div>
<div class="a" style="left:530px;top:770px;width:1px;height:25px;background:#d6d6d6"></div>
<div class="cell" style="left:530px;top:770px;width:101px">eurusd</div>
<div class="a" style="left:635px;top:770px;width:1px;height:25px;background:#d6d6d6"></div>
<div class="cell" style="left:635px;top:770px;width:113px">1.09494</div>
<div class="a" style="left:752px;top:770px;width:1px;height:25px;background:#d6d6d6"></div>
<div class="cell" style="left:752px;top:770px;width:113px">0.00000</div>
<div class="a" style="left:869px;top:770px;width:1px;height:25px;background:#d6d6d6"></div>
<div class="cell" style="left:869px;top:770px;width:113px">1.09622</div>
<div class="a" style="left:986px;top:770px;width:1px;height:25px;background:#d6d6d6"></div>
<div class="cell" style="left:986px;top:770px;width:113px">1.09490</div>
<div class="a" style="left:1103px;top:770px;width:1px;height:25px;background:#d6d6d6"></div>
<div class="cell" style="left:1103px;top:770px;width:113px">0.00</div>
<div class="a" style="left:1220px;top:770px;width:1px;height:25px;background:#d6d6d6"></div>
<div class="cell" style="left:1220px;top:770px;width:113px">-0.18</div>
<div class="a" style="left:1337px;top:770px;width:1px;height:25px;background:#d6d6d6"></div>
<div class="cell" style="left:1337px;top:770px;width:147px">-0.04</div>
<svg class="a" style="left:1494px;top:775px" width="14" height="14" viewBox="0 0 14 14"><path d="M1.500 1.500l11 11M12.500 1.500l-11 11" stroke="#8c8c8c" stroke-width="1.900"/></svg>
<div class="a" style="left:1513px;top:770px;width:1px;height:25px;background:#d6d6d6"></div>
<div class="cell" style="left:1513px;top:770px;width:355px"><span style="font-size:15px">飞翼</span><span id="t47" style="letter-spacing:-0.45px">EA</span></div>
<div class="a" style="left:1873px;top:770px;width:1px;height:25px;background:#d6d6d6"></div>
<div class="a" style="left:-7px;top:779px;width:9px;height:12px;border-radius:50%;background:#2a7fb0"></div>
<div class="a" style="left:0;top:795px;width:1876px;height:25px;background:#ebebeb;border-bottom:1px solid #c6c6c6"></div>
<div class="cell" style="left:9px;top:795px;text-align:left">168973730</div>
<div class="a" style="left:132px;top:795px;width:1px;height:25px;background:#d6d6d6"></div>
<div class="cell" style="left:132px;top:795px;width:207px">2024.03.13 22:16:53</div>
<div class="a" style="left:343px;top:795px;width:1px;height:25px;background:#d6d6d6"></div>
<div class="cell" style="left:343px;top:795px;width:100px">buy</div>
<div class="a" style="left:447px;top:795px;width:1px;height:25px;background:#d6d6d6"></div>
<div class="cell" style="left:447px;top:795px;width:79px">0.01</div>
<div class="a" style="left:530px;top:795px;width:1px;height:25px;background:#d6d6d6"></div>
<div class="cell" style="left:530px;top:795px;width:101px">eurusd</div>
<div class="a" style="left:635px;top:795px;width:1px;height:25px;background:#d6d6d6"></div>
<div class="cell" style="left:635px;top:795px;width:113px">1.09494</div>
<div class="a" style="left:752px;top:795px;width:1px;height:25px;background:#d6d6d6"></div>
<div class="cell" style="left:752px;top:795px;width:113px">0.00000</div>
<div class="a" style="left:869px;top:795px;width:1px;height:25px;background:#d6d6d6"></div>
<div class="cell" style="left:869px;top:795px;width:113px">1.09622</div>
<div class="a" style="left:986px;top:795px;width:1px;height:25px;background:#d6d6d6"></div>
<div class="cell" style="left:986px;top:795px;width:113px">1.09490</div>
<div class="a" style="left:1103px;top:795px;width:1px;height:25px;background:#d6d6d6"></div>
<div class="cell" style="left:1103px;top:795px;width:113px">0.00</div>
<div class="a" style="left:1220px;top:795px;width:1px;height:25px;background:#d6d6d6"></div>
<div class="cell" style="left:1220px;top:795px;width:113px">-0.18</div>
<div class="a" style="left:1337px;top:795px;width:1px;height:25px;background:#d6d6d6"></div>
<div class="cell" style="left:1337px;top:795px;width:147px">-0.04</div>
<svg class="a" style="left:1494px;top:800px" width="14" height="14" viewBox="0 0 14 14"><path d="M1.500 1.500l11 11M12.500 1.500l-11 11" stroke="#8c8c8c" stroke-width="1.900"/></svg>
<div class="a" style="left:1513px;top:795px;width:1px;height:25px;background:#d6d6d6"></div>
<div class="cell" style="left:1513px;top:795px;width:355px"><span style="font-size:15px">飞翼</span><span id="t48" style="letter-spacing:-0.45px">EA</span></div>
<div class="a" style="left:1873px;top:795px;width:1px;height:25px;background:#d6d6d6"></div>
<div class="a" style="left:-7px;top:804px;width:9px;height:12px;border-radius:50%;background:#2a7fb0"></div>
<div class="a" style="left:0;top:820px;width:1876px;height:24px;background:#c8c8c8"></div>
<div class="a u" style="left:8px;top:820px;height:24px;line-height:24px;font-weight:bold;color:#111"><span id="t49" style="letter-spacing:-0.95px"><span style="font-size:15px">余额</span>: 5 270.89 USD</span></div>
<div class="a u" style="left:152.9px;top:820px;height:24px;line-height:24px;font-weight:bold;color:#111"><span id="t50" style="letter-spacing:-1.02px"><span style="font-size:15px">净值</span>: 5 256.16</span></div>
<div class="a u" style="left:261.9px;top:820px;height:24px;line-height:24px;font-weight:bold;color:#111"><span id="t51" style="letter-spacing:-0.84px"><span style="font-size:15px">已用预付款</span>: 35.02</span></div>
<div class="a u" style="left:393.5px;top:820px;height:24px;line-height:24px;font-weight:bold;color:#111"><span id="t52" style="letter-spacing:-0.90px"><span style="font-size:15px">可用预付款</span>: 5 221.14</span></div>
<div class="a u" style="left:545px;top:820px;height:24px;line-height:24px;font-weight:bold;color:#111"><span id="t53" style="letter-spacing:-0.78px"><span style="font-size:15px">预付款比例</span>: 15008.38%</span></div>
<div class="a u" style="left:1337px;top:820px;width:147px;height:24px;line-height:24px;font-weight:bold;color:#111;text-align:right">-14.73</div>
<div class="a" style="left:859.500px;top:584px;width:263px;height:24.500px;background:#fff;border:1px solid #8a8a8a;box-shadow:1px 1px 2px rgba(0,0,0,.25)"></div>
<div class="a u" style="left:864.400px;top:584.500px;height:24px;line-height:24px;color:#6a6a6a"><span id="t54" style="letter-spacing:-0.32px">#168843950, EA<span style="font-size:15px">下单</span>, EA id 201020</span></div>
<div class="a" style="left:1666.400px;top:822px;height:40px;line-height:40px;font-size:30px;font-weight:300;color:#fff;text-shadow:1.2px 1.2px 0 rgba(0,0,0,.8),0 0 1px rgba(0,0,0,.25)"><span id="t55" style="letter-spacing:1.84px">@汇市策略员</span></div>
<svg class="a" style="left:1622px;top:825px" width="42" height="44" viewBox="0 0 42 44"><path d="M13 5.500h12.500a9.500 9.500 0 0 1 9.500 9.500v8.500a9.500 9.500 0 0 1-9.500 9.500h-5.500q-2 4-6.500 5.500 1.500-3 1-5.500h-1a9.500 9.500 0 0 1-9.500-9.500v-8.500a9.500 9.500 0 0 1 9.500-9.500z" fill="#111" transform="translate(1.300 1.300)"/><path d="M13 5.500h12.500a9.500 9.500 0 0 1 9.500 9.500v8.500a9.500 9.500 0 0 1-9.500 9.500h-5.500q-2 4-6.500 5.500 1.500-3 1-5.500h-1a9.500 9.500 0 0 1-9.500-9.500v-8.500a9.500 9.500 0 0 1 9.500-9.500z" fill="#fff"/><path d="M25.500 11.500q-6-2-8 3.500l-4.500 15M12 18.500h9" fill="none" stroke="#111" stroke-width="2.200" stroke-linecap="round"/><circle cx="23.500" cy="19" r="1.200" fill="#111"/></svg>
<div class="a" style="left:1874px;top:493px;width:2px;height:351px;background:#f2f2f2"></div>
</body></html>
